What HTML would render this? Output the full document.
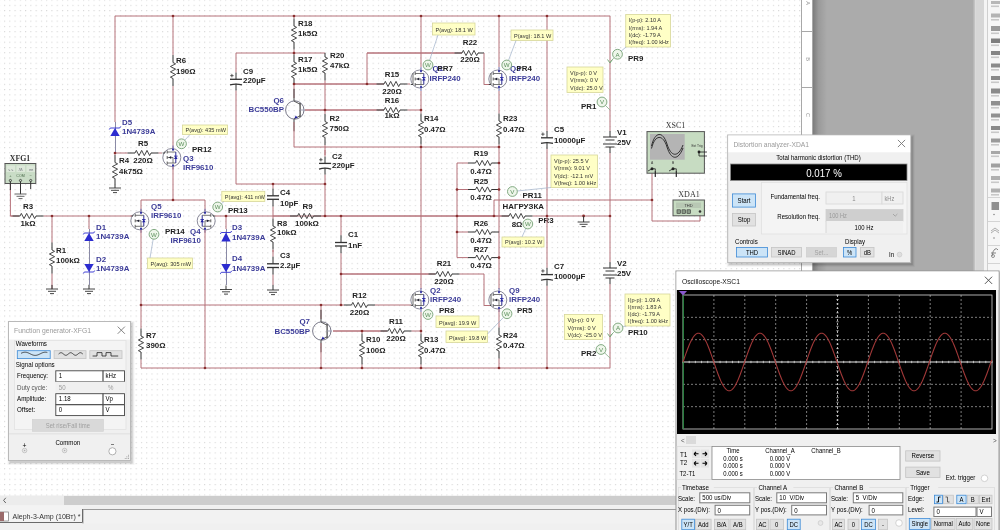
<!DOCTYPE html><html><head><meta charset="utf-8"><style>
*{margin:0;padding:0;box-sizing:border-box}
html,body{width:1000px;height:530px;overflow:hidden;background:#fff;font-family:"Liberation Sans",sans-serif}
#root{position:relative;width:1000px;height:530px;overflow:hidden;filter:blur(0.3px)}
svg{position:absolute;left:0;top:0}
.dlg{position:absolute;background:#f0f0f0;border:1px solid #a8a8a8;box-shadow:1px 1px 3px rgba(0,0,0,.35)}
.abs{position:absolute}
</style></head><body><div id="root"><svg width="1000" height="530" viewBox="0 0 1000 530"><defs><pattern id="dots" x="4.0" y="-0.45" width="5.266" height="5.266" patternUnits="userSpaceOnUse"><rect x="0" y="0" width="1.1" height="1.1" fill="#d6d6d6"/></pattern></defs><rect x="0" y="0" width="802" height="496" fill="url(#dots)"/><polyline points="115,16 610,16" fill="none" stroke="#b6727a" stroke-width="1"/><polyline points="115,16 115,122" fill="none" stroke="#b6727a" stroke-width="1"/><line x1="115.5" y1="122" x2="115.5" y2="153" stroke="#8a8aa6" stroke-width="1"/><polygon points="110.3,136 119.7,136 115,128" fill="#2c2cd0"/><path d="M109.3,129.5 L110.3,128 H119.7 L120.7,126.5" fill="none" stroke="#2c2cd0" stroke-width="0.9"/><text x="122" y="124.5" font-family="Liberation Sans" font-size="7.9" font-weight="bold" fill="#3b3b98" text-anchor="start" >D5</text><text x="122" y="134" font-family="Liberation Sans" font-size="7.9" font-weight="bold" fill="#3b3b98" text-anchor="start" >1N4739A</text><polyline points="115,153 115,155.0" fill="none" stroke="#b6727a" stroke-width="1"/><polyline points="115,184 115,184" fill="none" stroke="#b6727a" stroke-width="1"/><line x1="115" y1="155.0" x2="115" y2="162.5" stroke="#333" stroke-width="1"/><line x1="115" y1="178.5" x2="115" y2="184" stroke="#333" stroke-width="1"/><polyline points="115.00,162.50 117.60,163.83 112.40,166.50 117.60,169.17 112.40,171.83 117.60,174.50 112.40,177.17 115.00,178.50" fill="none" stroke="#333" stroke-width="0.9"/><text x="119" y="163.2" font-family="Liberation Sans" font-size="7.9" font-weight="bold" fill="#222" text-anchor="start" >R4</text><text x="119" y="173.6" font-family="Liberation Sans" font-size="7.9" font-weight="bold" fill="#222" text-anchor="start" >4k75Ω</text><line x1="115" y1="184" x2="115" y2="188" stroke="#333" stroke-width="1"/><path d="M109,188 h12 M111,190.3 h8 M113,192.6 h4" stroke="#333" stroke-width="0.9"/><polyline points="115,153 127.5,153" fill="none" stroke="#b6727a" stroke-width="1"/><polyline points="158.5,153 162,153" fill="none" stroke="#b6727a" stroke-width="1"/><line x1="127.5" y1="153" x2="135" y2="153" stroke="#333" stroke-width="1"/><line x1="151" y1="153" x2="158.5" y2="153" stroke="#333" stroke-width="1"/><polyline points="135.00,153.00 136.33,150.40 139.00,155.60 141.67,150.40 144.33,155.60 147.00,150.40 149.67,155.60 151.00,153.00" fill="none" stroke="#333" stroke-width="0.9"/><text x="143" y="146.2" font-family="Liberation Sans" font-size="7.9" font-weight="bold" fill="#222" text-anchor="middle" >R5</text><text x="143" y="163.2" font-family="Liberation Sans" font-size="7.9" font-weight="bold" fill="#222" text-anchor="middle" >220Ω</text><polyline points="173,16 173,55.0" fill="none" stroke="#b6727a" stroke-width="1"/><polyline points="173,86.0 173,148" fill="none" stroke="#b6727a" stroke-width="1"/><line x1="173" y1="55.0" x2="173" y2="62.5" stroke="#333" stroke-width="1"/><line x1="173" y1="78.5" x2="173" y2="86.0" stroke="#333" stroke-width="1"/><polyline points="173.00,62.50 175.60,63.83 170.40,66.50 175.60,69.17 170.40,71.83 175.60,74.50 170.40,77.17 173.00,78.50" fill="none" stroke="#333" stroke-width="0.9"/><text x="176" y="63" font-family="Liberation Sans" font-size="7.9" font-weight="bold" fill="#222" text-anchor="start" >R6</text><text x="176" y="74" font-family="Liberation Sans" font-size="7.9" font-weight="bold" fill="#222" text-anchor="start" >190Ω</text><circle cx="171.8" cy="157.5" r="9" fill="none" stroke="#6c6c80" stroke-width="0.8"/><line x1="173" y1="145.5" x2="173" y2="151.0" stroke="#7070b0" stroke-width="1"/><line x1="173" y1="164.0" x2="173" y2="169.5" stroke="#7070b0" stroke-width="1"/><line x1="162.8" y1="153" x2="165" y2="153" stroke="#333" stroke-width="0.9"/><line x1="165" y1="151.5" x2="165" y2="153" stroke="#555" stroke-width="0.9"/><line x1="167.2" y1="150.5" x2="167.2" y2="153.5" stroke="#555" stroke-width="0.9"/><line x1="167.2" y1="156.0" x2="167.2" y2="159.0" stroke="#555" stroke-width="0.9"/><line x1="167.2" y1="161.5" x2="167.2" y2="164.5" stroke="#555" stroke-width="0.9"/><line x1="167.2" y1="152.0" x2="173" y2="152.0" stroke="#555" stroke-width="0.8"/><line x1="167.2" y1="157.5" x2="173" y2="157.5" stroke="#555" stroke-width="0.8"/><line x1="167.2" y1="163.0" x2="173" y2="163.0" stroke="#555" stroke-width="0.8"/><line x1="173" y1="157.5" x2="173" y2="163.0" stroke="#555" stroke-width="0.8"/><polygon points="168.7,157.5 171.2,156.1 171.2,158.9" fill="#223"/><line x1="173" y1="152.0" x2="175.8" y2="152.0" stroke="#555" stroke-width="0.8"/><line x1="173" y1="163.0" x2="175.8" y2="163.0" stroke="#555" stroke-width="0.8"/><line x1="175.8" y1="152.0" x2="175.8" y2="163.0" stroke="#2a2a90" stroke-width="1"/><polygon points="174.0,159.0 177.60000000000002,159.0 175.8,156.3" fill="#2020a0"/><rect x="174.0" y="155.7" width="3.6" height="0.8" fill="#2020a0"/><circle cx="173" cy="149.5" r="1" fill="#2828a0"/><circle cx="173" cy="165.5" r="1" fill="#2828a0"/><polyline points="173,167 173,200" fill="none" stroke="#b6727a" stroke-width="1"/><text x="183" y="160.8" font-family="Liberation Sans" font-size="7.9" font-weight="bold" fill="#3b3b98" text-anchor="start" >Q3</text><text x="183" y="169.8" font-family="Liberation Sans" font-size="7.9" font-weight="bold" fill="#3b3b98" text-anchor="start" >IRF9610</text><text x="192" y="152" font-family="Liberation Sans" font-size="7.9" font-weight="bold" fill="#222" text-anchor="start" >PR12</text><polyline points="141,200 205,200" fill="none" stroke="#b6727a" stroke-width="1"/><polyline points="141,200 141,211" fill="none" stroke="#b6727a" stroke-width="1"/><polyline points="205,200 205,211" fill="none" stroke="#b6727a" stroke-width="1"/><circle cx="139.8" cy="220.8" r="9" fill="none" stroke="#6c6c80" stroke-width="0.8"/><line x1="141" y1="208.8" x2="141" y2="214.3" stroke="#7070b0" stroke-width="1"/><line x1="141" y1="227.3" x2="141" y2="232.8" stroke="#7070b0" stroke-width="1"/><line x1="130.8" y1="216" x2="133" y2="216" stroke="#333" stroke-width="0.9"/><line x1="133" y1="214.8" x2="133" y2="216" stroke="#555" stroke-width="0.9"/><line x1="135.2" y1="213.8" x2="135.2" y2="216.8" stroke="#555" stroke-width="0.9"/><line x1="135.2" y1="219.3" x2="135.2" y2="222.3" stroke="#555" stroke-width="0.9"/><line x1="135.2" y1="224.8" x2="135.2" y2="227.8" stroke="#555" stroke-width="0.9"/><line x1="135.2" y1="215.3" x2="141" y2="215.3" stroke="#555" stroke-width="0.8"/><line x1="135.2" y1="220.8" x2="141" y2="220.8" stroke="#555" stroke-width="0.8"/><line x1="135.2" y1="226.3" x2="141" y2="226.3" stroke="#555" stroke-width="0.8"/><line x1="141" y1="220.8" x2="141" y2="226.3" stroke="#555" stroke-width="0.8"/><polygon points="136.7,220.8 139.2,219.4 139.2,222.20000000000002" fill="#223"/><line x1="141" y1="215.3" x2="143.8" y2="215.3" stroke="#555" stroke-width="0.8"/><line x1="141" y1="226.3" x2="143.8" y2="226.3" stroke="#555" stroke-width="0.8"/><line x1="143.8" y1="215.3" x2="143.8" y2="226.3" stroke="#2a2a90" stroke-width="1"/><polygon points="142.0,222.3 145.60000000000002,222.3 143.8,219.60000000000002" fill="#2020a0"/><rect x="142.0" y="219.0" width="3.6" height="0.8" fill="#2020a0"/><circle cx="141" cy="212.8" r="1" fill="#2828a0"/><circle cx="141" cy="228.8" r="1" fill="#2828a0"/><circle cx="206.2" cy="220.8" r="9" fill="none" stroke="#6c6c80" stroke-width="0.8"/><line x1="205" y1="208.8" x2="205" y2="214.3" stroke="#7070b0" stroke-width="1"/><line x1="205" y1="227.3" x2="205" y2="232.8" stroke="#7070b0" stroke-width="1"/><line x1="215.2" y1="216" x2="213" y2="216" stroke="#333" stroke-width="0.9"/><line x1="213" y1="214.8" x2="213" y2="216" stroke="#555" stroke-width="0.9"/><line x1="210.8" y1="213.8" x2="210.8" y2="216.8" stroke="#555" stroke-width="0.9"/><line x1="210.8" y1="219.3" x2="210.8" y2="222.3" stroke="#555" stroke-width="0.9"/><line x1="210.8" y1="224.8" x2="210.8" y2="227.8" stroke="#555" stroke-width="0.9"/><line x1="210.8" y1="215.3" x2="205" y2="215.3" stroke="#555" stroke-width="0.8"/><line x1="210.8" y1="220.8" x2="205" y2="220.8" stroke="#555" stroke-width="0.8"/><line x1="210.8" y1="226.3" x2="205" y2="226.3" stroke="#555" stroke-width="0.8"/><line x1="205" y1="220.8" x2="205" y2="226.3" stroke="#555" stroke-width="0.8"/><polygon points="209.3,220.8 206.8,219.4 206.8,222.20000000000002" fill="#223"/><line x1="205" y1="215.3" x2="202.2" y2="215.3" stroke="#555" stroke-width="0.8"/><line x1="205" y1="226.3" x2="202.2" y2="226.3" stroke="#555" stroke-width="0.8"/><line x1="202.2" y1="215.3" x2="202.2" y2="226.3" stroke="#2a2a90" stroke-width="1"/><polygon points="200.39999999999998,222.3 204.0,222.3 202.2,219.60000000000002" fill="#2020a0"/><rect x="200.39999999999998" y="219.0" width="3.6" height="0.8" fill="#2020a0"/><circle cx="205" cy="212.8" r="1" fill="#2828a0"/><circle cx="205" cy="228.8" r="1" fill="#2828a0"/><text x="151" y="208.5" font-family="Liberation Sans" font-size="7.9" font-weight="bold" fill="#3b3b98" text-anchor="start" >Q5</text><text x="151" y="217.5" font-family="Liberation Sans" font-size="7.9" font-weight="bold" fill="#3b3b98" text-anchor="start" >IRF9610</text><text x="165" y="233.5" font-family="Liberation Sans" font-size="7.9" font-weight="bold" fill="#222" text-anchor="start" >PR14</text><text x="190" y="233.5" font-family="Liberation Sans" font-size="7.9" font-weight="bold" fill="#3b3b98" text-anchor="start" >Q4</text><text x="170.5" y="243" font-family="Liberation Sans" font-size="7.9" font-weight="bold" fill="#3b3b98" text-anchor="start" >IRF9610</text><text x="228" y="213" font-family="Liberation Sans" font-size="7.9" font-weight="bold" fill="#222" text-anchor="start" >PR13</text><polyline points="141,230 141,305" fill="none" stroke="#b6727a" stroke-width="1"/><polyline points="141,305 141,328.5" fill="none" stroke="#b6727a" stroke-width="1"/><polyline points="141,359.5 141,368" fill="none" stroke="#b6727a" stroke-width="1"/><line x1="141" y1="328.5" x2="141" y2="336" stroke="#333" stroke-width="1"/><line x1="141" y1="352" x2="141" y2="359.5" stroke="#333" stroke-width="1"/><polyline points="141.00,336.00 143.60,337.33 138.40,340.00 143.60,342.67 138.40,345.33 143.60,348.00 138.40,350.67 141.00,352.00" fill="none" stroke="#333" stroke-width="0.9"/><text x="146" y="337.5" font-family="Liberation Sans" font-size="7.9" font-weight="bold" fill="#222" text-anchor="start" >R7</text><text x="146" y="347.5" font-family="Liberation Sans" font-size="7.9" font-weight="bold" fill="#222" text-anchor="start" >390Ω</text><polyline points="205,230 205,368" fill="none" stroke="#b6727a" stroke-width="1"/><polyline points="10.4,183 10.4,216 19,216" fill="none" stroke="#b6727a" stroke-width="1"/><polyline points="10.4,216 12.5,216" fill="none" stroke="#b6727a" stroke-width="1"/><polyline points="43.5,216 132,216" fill="none" stroke="#b6727a" stroke-width="1"/><line x1="12.5" y1="216" x2="20" y2="216" stroke="#333" stroke-width="1"/><line x1="36" y1="216" x2="43.5" y2="216" stroke="#333" stroke-width="1"/><polyline points="20.00,216.00 21.33,213.40 24.00,218.60 26.67,213.40 29.33,218.60 32.00,213.40 34.67,218.60 36.00,216.00" fill="none" stroke="#333" stroke-width="0.9"/><text x="28" y="209.4" font-family="Liberation Sans" font-size="7.9" font-weight="bold" fill="#222" text-anchor="middle" >R3</text><text x="28" y="226.4" font-family="Liberation Sans" font-size="7.9" font-weight="bold" fill="#222" text-anchor="middle" >1kΩ</text><polyline points="52,216 52,242.5" fill="none" stroke="#b6727a" stroke-width="1"/><polyline points="52,273.5 52,289" fill="none" stroke="#b6727a" stroke-width="1"/><line x1="52" y1="242.5" x2="52" y2="250" stroke="#333" stroke-width="1"/><line x1="52" y1="266" x2="52" y2="273.5" stroke="#333" stroke-width="1"/><polyline points="52.00,250.00 54.60,251.33 49.40,254.00 54.60,256.67 49.40,259.33 54.60,262.00 49.40,264.67 52.00,266.00" fill="none" stroke="#333" stroke-width="0.9"/><text x="56" y="252.8" font-family="Liberation Sans" font-size="7.9" font-weight="bold" fill="#222" text-anchor="start" >R1</text><text x="56" y="263.2" font-family="Liberation Sans" font-size="7.9" font-weight="bold" fill="#222" text-anchor="start" >100kΩ</text><line x1="52" y1="285" x2="52" y2="289" stroke="#333" stroke-width="1"/><path d="M46,289 h12 M48,291.3 h8 M50,293.6 h4" stroke="#333" stroke-width="0.9"/><polyline points="89,216 89,229" fill="none" stroke="#b6727a" stroke-width="1"/><line x1="89.5" y1="229" x2="89.5" y2="285" stroke="#8a8aa6" stroke-width="1"/><polygon points="84.3,241 93.7,241 89,233" fill="#2c2cd0"/><path d="M83.3,234.5 L84.3,233 H93.7 L94.7,231.5" fill="none" stroke="#2c2cd0" stroke-width="0.9"/><polygon points="84.3,264 93.7,264 89,272" fill="#2c2cd0"/><path d="M83.3,273.5 L84.3,272 H93.7 L94.7,270.5" fill="none" stroke="#2c2cd0" stroke-width="0.9"/><text x="96" y="229.6" font-family="Liberation Sans" font-size="7.9" font-weight="bold" fill="#3b3b98" text-anchor="start" >D1</text><text x="96" y="239" font-family="Liberation Sans" font-size="7.9" font-weight="bold" fill="#3b3b98" text-anchor="start" >1N4739A</text><text x="96" y="261.5" font-family="Liberation Sans" font-size="7.9" font-weight="bold" fill="#3b3b98" text-anchor="start" >D2</text><text x="96" y="271" font-family="Liberation Sans" font-size="7.9" font-weight="bold" fill="#3b3b98" text-anchor="start" >1N4739A</text><line x1="89" y1="285" x2="89" y2="289" stroke="#333" stroke-width="1"/><path d="M83,289 h12 M85,291.3 h8 M87,293.6 h4" stroke="#333" stroke-width="0.9"/><polyline points="215,216 273,216" fill="none" stroke="#b6727a" stroke-width="1"/><polyline points="226,216 226,229" fill="none" stroke="#b6727a" stroke-width="1"/><line x1="226.5" y1="229" x2="226.5" y2="285" stroke="#8a8aa6" stroke-width="1"/><polygon points="221.3,241.5 230.7,241.5 226,232.5" fill="#2c2cd0"/><path d="M220.3,234.0 L221.3,232.5 H230.7 L231.7,231.0" fill="none" stroke="#2c2cd0" stroke-width="0.9"/><polygon points="221.3,264 230.7,264 226,272.3" fill="#2c2cd0"/><path d="M220.3,273.8 L221.3,272.3 H230.7 L231.7,270.8" fill="none" stroke="#2c2cd0" stroke-width="0.9"/><text x="232" y="230" font-family="Liberation Sans" font-size="7.9" font-weight="bold" fill="#3b3b98" text-anchor="start" >D3</text><text x="232" y="239.5" font-family="Liberation Sans" font-size="7.9" font-weight="bold" fill="#3b3b98" text-anchor="start" >1N4739A</text><text x="232" y="261" font-family="Liberation Sans" font-size="7.9" font-weight="bold" fill="#3b3b98" text-anchor="start" >D4</text><text x="232" y="271" font-family="Liberation Sans" font-size="7.9" font-weight="bold" fill="#3b3b98" text-anchor="start" >1N4739A</text><line x1="226" y1="285.5" x2="226" y2="289.5" stroke="#333" stroke-width="1"/><path d="M220,289.5 h12 M222,291.8 h8 M224,294.1 h4" stroke="#333" stroke-width="0.9"/><polyline points="236,53 325,53" fill="none" stroke="#b6727a" stroke-width="1"/><polyline points="236,53 236,72.5" fill="none" stroke="#b6727a" stroke-width="1"/><polyline points="236,90.5 236,184" fill="none" stroke="#b6727a" stroke-width="1"/><line x1="236" y1="72.5" x2="236" y2="79.25" stroke="#333" stroke-width="1"/><line x1="236" y1="83.75" x2="236" y2="90.5" stroke="#333" stroke-width="1"/><rect x="230" y="78.65" width="12" height="1.3" fill="#333"/><path d="M230,84.95 Q236,83.15 242,84.95" fill="none" stroke="#333" stroke-width="1.3"/><path d="M230.2,75.65 h3.4 M231.9,73.95 v3.4" stroke="#333" stroke-width="0.8"/><text x="243" y="74.3" font-family="Liberation Sans" font-size="7.9" font-weight="bold" fill="#222" text-anchor="start" >C9</text><text x="243" y="83.3" font-family="Liberation Sans" font-size="7.9" font-weight="bold" fill="#222" text-anchor="start" >220µF</text><polyline points="236,184 325,184" fill="none" stroke="#b6727a" stroke-width="1"/><polyline points="294,16 294,18.5" fill="none" stroke="#b6727a" stroke-width="1"/><polyline points="294,49.5 294,53" fill="none" stroke="#b6727a" stroke-width="1"/><line x1="294" y1="18.5" x2="294" y2="26" stroke="#333" stroke-width="1"/><line x1="294" y1="42" x2="294" y2="49.5" stroke="#333" stroke-width="1"/><polyline points="294.00,26.00 296.60,27.33 291.40,30.00 296.60,32.67 291.40,35.33 296.60,38.00 291.40,40.67 294.00,42.00" fill="none" stroke="#333" stroke-width="0.9"/><text x="298" y="26" font-family="Liberation Sans" font-size="7.9" font-weight="bold" fill="#222" text-anchor="start" >R18</text><text x="298" y="35.7" font-family="Liberation Sans" font-size="7.9" font-weight="bold" fill="#222" text-anchor="start" >1k5Ω</text><polyline points="294,53 294,54.5" fill="none" stroke="#b6727a" stroke-width="1"/><polyline points="294,84 294,84" fill="none" stroke="#b6727a" stroke-width="1"/><line x1="294" y1="54.5" x2="294" y2="62" stroke="#333" stroke-width="1"/><line x1="294" y1="78" x2="294" y2="84" stroke="#333" stroke-width="1"/><polyline points="294.00,62.00 296.60,63.33 291.40,66.00 296.60,68.67 291.40,71.33 296.60,74.00 291.40,76.67 294.00,78.00" fill="none" stroke="#333" stroke-width="0.9"/><text x="298" y="62.3" font-family="Liberation Sans" font-size="7.9" font-weight="bold" fill="#222" text-anchor="start" >R17</text><text x="298" y="71.6" font-family="Liberation Sans" font-size="7.9" font-weight="bold" fill="#222" text-anchor="start" >1k5Ω</text><polyline points="294,84 294,98" fill="none" stroke="#b6727a" stroke-width="1"/><circle cx="294.8" cy="110" r="9.2" fill="none" stroke="#55556a" stroke-width="0.8"/><line x1="300.1" y1="103" x2="300.1" y2="117" stroke="#333" stroke-width="1.1"/><line x1="300.1" y1="110" x2="305.0" y2="110" stroke="#9a9ab0" stroke-width="0.9"/><line x1="294" y1="101.1" x2="300.1" y2="104.2" stroke="#444" stroke-width="0.9"/><line x1="300.1" y1="115.8" x2="294" y2="118.9" stroke="#444" stroke-width="0.9"/><line x1="294" y1="100.8" x2="294" y2="88.8" stroke="#444" stroke-width="1"/><line x1="294" y1="119.2" x2="294" y2="131.2" stroke="#444" stroke-width="1"/><polygon points="294.3,118.6 297.6,117.8 295.8,115.6" fill="#2020a0"/><text x="284" y="102.5" font-family="Liberation Sans" font-size="7.9" font-weight="bold" fill="#3b3b98" text-anchor="end" >Q6</text><text x="284" y="112" font-family="Liberation Sans" font-size="7.9" font-weight="bold" fill="#3b3b98" text-anchor="end" >BC550BP</text><polyline points="294,122 294,147 499,147" fill="none" stroke="#b6727a" stroke-width="1"/><polyline points="294,84 384,84" fill="none" stroke="#b6727a" stroke-width="1"/><polyline points="294,84 376.5,84" fill="none" stroke="#b6727a" stroke-width="1"/><polyline points="407.5,84 410,84" fill="none" stroke="#b6727a" stroke-width="1"/><line x1="376.5" y1="84" x2="384" y2="84" stroke="#333" stroke-width="1"/><line x1="400" y1="84" x2="407.5" y2="84" stroke="#333" stroke-width="1"/><polyline points="384.00,84.00 385.33,81.40 388.00,86.60 390.67,81.40 393.33,86.60 396.00,81.40 398.67,86.60 400.00,84.00" fill="none" stroke="#333" stroke-width="0.9"/><text x="392" y="76.5" font-family="Liberation Sans" font-size="7.9" font-weight="bold" fill="#222" text-anchor="middle" >R15</text><text x="392" y="94" font-family="Liberation Sans" font-size="7.9" font-weight="bold" fill="#222" text-anchor="middle" >220Ω</text><polyline points="367,53 367,84" fill="none" stroke="#b6727a" stroke-width="1"/><polyline points="325,53 325,53" fill="none" stroke="#b6727a" stroke-width="1"/><polyline points="325,80.5 325,110" fill="none" stroke="#b6727a" stroke-width="1"/><line x1="325" y1="53" x2="325" y2="57" stroke="#333" stroke-width="1"/><line x1="325" y1="73" x2="325" y2="80.5" stroke="#333" stroke-width="1"/><polyline points="325.00,57.00 327.60,58.33 322.40,61.00 327.60,63.67 322.40,66.33 327.60,69.00 322.40,71.67 325.00,73.00" fill="none" stroke="#333" stroke-width="0.9"/><text x="330" y="58" font-family="Liberation Sans" font-size="7.9" font-weight="bold" fill="#222" text-anchor="start" >R20</text><text x="330" y="68" font-family="Liberation Sans" font-size="7.9" font-weight="bold" fill="#222" text-anchor="start" >47kΩ</text><polyline points="325,110 325,114.0" fill="none" stroke="#b6727a" stroke-width="1"/><polyline points="325,145.0 325,147" fill="none" stroke="#b6727a" stroke-width="1"/><line x1="325" y1="114.0" x2="325" y2="121.5" stroke="#333" stroke-width="1"/><line x1="325" y1="137.5" x2="325" y2="145.0" stroke="#333" stroke-width="1"/><polyline points="325.00,121.50 327.60,122.83 322.40,125.50 327.60,128.17 322.40,130.83 327.60,133.50 322.40,136.17 325.00,137.50" fill="none" stroke="#333" stroke-width="0.9"/><text x="329.5" y="121.3" font-family="Liberation Sans" font-size="7.9" font-weight="bold" fill="#222" text-anchor="start" >R2</text><text x="329.5" y="131.3" font-family="Liberation Sans" font-size="7.9" font-weight="bold" fill="#222" text-anchor="start" >750Ω</text><polyline points="325,147 325,155" fill="none" stroke="#b6727a" stroke-width="1"/><polyline points="325,150 325,156.6" fill="none" stroke="#b6727a" stroke-width="1"/><polyline points="325,174.6 325,216" fill="none" stroke="#b6727a" stroke-width="1"/><line x1="325" y1="156.6" x2="325" y2="163.35" stroke="#333" stroke-width="1"/><line x1="325" y1="167.85" x2="325" y2="174.6" stroke="#333" stroke-width="1"/><rect x="319" y="162.75" width="12" height="1.3" fill="#333"/><path d="M319,169.04999999999998 Q325,167.25 331,169.04999999999998" fill="none" stroke="#333" stroke-width="1.3"/><path d="M319.2,159.75 h3.4 M320.9,158.04999999999998 v3.4" stroke="#333" stroke-width="0.8"/><text x="332" y="158.8" font-family="Liberation Sans" font-size="7.9" font-weight="bold" fill="#222" text-anchor="start" >C2</text><text x="332" y="168" font-family="Liberation Sans" font-size="7.9" font-weight="bold" fill="#222" text-anchor="start" >220µF</text><polyline points="305,110 384,110" fill="none" stroke="#b6727a" stroke-width="1"/><polyline points="305,110 376.5,110" fill="none" stroke="#b6727a" stroke-width="1"/><polyline points="407.5,110 421,110" fill="none" stroke="#b6727a" stroke-width="1"/><line x1="376.5" y1="110" x2="384" y2="110" stroke="#333" stroke-width="1"/><line x1="400" y1="110" x2="407.5" y2="110" stroke="#333" stroke-width="1"/><polyline points="384.00,110.00 385.33,107.40 388.00,112.60 390.67,107.40 393.33,112.60 396.00,107.40 398.67,112.60 400.00,110.00" fill="none" stroke="#333" stroke-width="0.9"/><text x="392" y="102.5" font-family="Liberation Sans" font-size="7.9" font-weight="bold" fill="#222" text-anchor="middle" >R16</text><text x="392" y="118" font-family="Liberation Sans" font-size="7.9" font-weight="bold" fill="#222" text-anchor="middle" >1kΩ</text><polyline points="421,16 421,67" fill="none" stroke="#b6727a" stroke-width="1"/><circle cx="419.8" cy="79" r="9" fill="none" stroke="#6c6c80" stroke-width="0.8"/><line x1="421" y1="67" x2="421" y2="72.5" stroke="#7070b0" stroke-width="1"/><line x1="421" y1="85.5" x2="421" y2="91" stroke="#7070b0" stroke-width="1"/><line x1="410.8" y1="84.5" x2="413" y2="84.5" stroke="#333" stroke-width="0.9"/><line x1="413" y1="73" x2="413" y2="84.5" stroke="#555" stroke-width="0.9"/><line x1="415.2" y1="72" x2="415.2" y2="75" stroke="#555" stroke-width="0.9"/><line x1="415.2" y1="77.5" x2="415.2" y2="80.5" stroke="#555" stroke-width="0.9"/><line x1="415.2" y1="83" x2="415.2" y2="86" stroke="#555" stroke-width="0.9"/><line x1="415.2" y1="73.5" x2="421" y2="73.5" stroke="#555" stroke-width="0.8"/><line x1="415.2" y1="79" x2="421" y2="79" stroke="#555" stroke-width="0.8"/><line x1="415.2" y1="84.5" x2="421" y2="84.5" stroke="#555" stroke-width="0.8"/><line x1="421" y1="79" x2="421" y2="84.5" stroke="#555" stroke-width="0.8"/><polygon points="416.7,79 419.2,77.6 419.2,80.4" fill="#223"/><line x1="421" y1="73.5" x2="423.8" y2="73.5" stroke="#555" stroke-width="0.8"/><line x1="421" y1="84.5" x2="423.8" y2="84.5" stroke="#555" stroke-width="0.8"/><line x1="423.8" y1="73.5" x2="423.8" y2="84.5" stroke="#2a2a90" stroke-width="1"/><polygon points="422.0,80.5 425.6,80.5 423.8,77.8" fill="#2020a0"/><rect x="422.0" y="77.2" width="3.6" height="0.8" fill="#2020a0"/><circle cx="421" cy="71" r="1" fill="#2828a0"/><circle cx="421" cy="87" r="1" fill="#2828a0"/><polyline points="421,91 421,110" fill="none" stroke="#b6727a" stroke-width="1"/><polyline points="421,110 421,113.5" fill="none" stroke="#b6727a" stroke-width="1"/><polyline points="421,144.5 421,147" fill="none" stroke="#b6727a" stroke-width="1"/><line x1="421" y1="113.5" x2="421" y2="121" stroke="#333" stroke-width="1"/><line x1="421" y1="137" x2="421" y2="144.5" stroke="#333" stroke-width="1"/><polyline points="421.00,121.00 423.60,122.33 418.40,125.00 423.60,127.67 418.40,130.33 423.60,133.00 418.40,135.67 421.00,137.00" fill="none" stroke="#333" stroke-width="0.9"/><text x="424" y="121.4" font-family="Liberation Sans" font-size="7.9" font-weight="bold" fill="#222" text-anchor="start" >R14</text><text x="424" y="132" font-family="Liberation Sans" font-size="7.9" font-weight="bold" fill="#222" text-anchor="start" >0.47Ω</text><polyline points="421,147 421,289" fill="none" stroke="#b6727a" stroke-width="1"/><text x="432.5" y="71.3" font-family="Liberation Sans" font-size="7.9" font-weight="bold" fill="#3b3b98" text-anchor="start" >Q1</text><text x="437.5" y="71.3" font-family="Liberation Sans" font-size="7.9" font-weight="bold" fill="#222" text-anchor="start" >PR7</text><text x="429.5" y="81.3" font-family="Liberation Sans" font-size="7.9" font-weight="bold" fill="#3b3b98" text-anchor="start" >IRFP240</text><circle cx="419.8" cy="300" r="9" fill="none" stroke="#6c6c80" stroke-width="0.8"/><line x1="421" y1="288" x2="421" y2="293.5" stroke="#7070b0" stroke-width="1"/><line x1="421" y1="306.5" x2="421" y2="312" stroke="#7070b0" stroke-width="1"/><line x1="410.8" y1="305.3" x2="413" y2="305.3" stroke="#333" stroke-width="0.9"/><line x1="413" y1="294" x2="413" y2="305.3" stroke="#555" stroke-width="0.9"/><line x1="415.2" y1="293" x2="415.2" y2="296" stroke="#555" stroke-width="0.9"/><line x1="415.2" y1="298.5" x2="415.2" y2="301.5" stroke="#555" stroke-width="0.9"/><line x1="415.2" y1="304" x2="415.2" y2="307" stroke="#555" stroke-width="0.9"/><line x1="415.2" y1="294.5" x2="421" y2="294.5" stroke="#555" stroke-width="0.8"/><line x1="415.2" y1="300" x2="421" y2="300" stroke="#555" stroke-width="0.8"/><line x1="415.2" y1="305.5" x2="421" y2="305.5" stroke="#555" stroke-width="0.8"/><line x1="421" y1="300" x2="421" y2="305.5" stroke="#555" stroke-width="0.8"/><polygon points="416.7,300 419.2,298.6 419.2,301.4" fill="#223"/><line x1="421" y1="294.5" x2="423.8" y2="294.5" stroke="#555" stroke-width="0.8"/><line x1="421" y1="305.5" x2="423.8" y2="305.5" stroke="#555" stroke-width="0.8"/><line x1="423.8" y1="294.5" x2="423.8" y2="305.5" stroke="#2a2a90" stroke-width="1"/><polygon points="422.0,301.5 425.6,301.5 423.8,298.8" fill="#2020a0"/><rect x="422.0" y="298.2" width="3.6" height="0.8" fill="#2020a0"/><circle cx="421" cy="292" r="1" fill="#2828a0"/><circle cx="421" cy="308" r="1" fill="#2828a0"/><polyline points="421,312 421,331" fill="none" stroke="#b6727a" stroke-width="1"/><text x="430" y="292.5" font-family="Liberation Sans" font-size="7.9" font-weight="bold" fill="#3b3b98" text-anchor="start" >Q2</text><text x="430" y="301.8" font-family="Liberation Sans" font-size="7.9" font-weight="bold" fill="#3b3b98" text-anchor="start" >IRFP240</text><text x="439" y="312.5" font-family="Liberation Sans" font-size="7.9" font-weight="bold" fill="#222" text-anchor="start" >PR8</text><polyline points="421,331 421,333.5" fill="none" stroke="#b6727a" stroke-width="1"/><polyline points="421,364.5 421,368" fill="none" stroke="#b6727a" stroke-width="1"/><line x1="421" y1="333.5" x2="421" y2="341" stroke="#333" stroke-width="1"/><line x1="421" y1="357" x2="421" y2="364.5" stroke="#333" stroke-width="1"/><polyline points="421.00,341.00 423.60,342.33 418.40,345.00 423.60,347.67 418.40,350.33 423.60,353.00 418.40,355.67 421.00,357.00" fill="none" stroke="#333" stroke-width="0.9"/><text x="424" y="342" font-family="Liberation Sans" font-size="7.9" font-weight="bold" fill="#222" text-anchor="start" >R13</text><text x="424" y="353" font-family="Liberation Sans" font-size="7.9" font-weight="bold" fill="#222" text-anchor="start" >0.47Ω</text><polyline points="367,53 462,53" fill="none" stroke="#b6727a" stroke-width="1"/><polyline points="367,53 454.5,53" fill="none" stroke="#b6727a" stroke-width="1"/><polyline points="484,53 484,53" fill="none" stroke="#b6727a" stroke-width="1"/><line x1="454.5" y1="53" x2="462" y2="53" stroke="#333" stroke-width="1"/><line x1="478" y1="53" x2="484" y2="53" stroke="#333" stroke-width="1"/><polyline points="462.00,53.00 463.33,50.40 466.00,55.60 468.67,50.40 471.33,55.60 474.00,50.40 476.67,55.60 478.00,53.00" fill="none" stroke="#333" stroke-width="0.9"/><text x="470" y="45" font-family="Liberation Sans" font-size="7.9" font-weight="bold" fill="#222" text-anchor="middle" >R22</text><text x="470" y="62" font-family="Liberation Sans" font-size="7.9" font-weight="bold" fill="#222" text-anchor="middle" >220Ω</text><polyline points="484,53 484,84.5 490,84.5" fill="none" stroke="#b6727a" stroke-width="1"/><polyline points="499,16 499,67" fill="none" stroke="#b6727a" stroke-width="1"/><circle cx="497.8" cy="79" r="9" fill="none" stroke="#6c6c80" stroke-width="0.8"/><line x1="499" y1="67" x2="499" y2="72.5" stroke="#7070b0" stroke-width="1"/><line x1="499" y1="85.5" x2="499" y2="91" stroke="#7070b0" stroke-width="1"/><line x1="488.8" y1="84.5" x2="491" y2="84.5" stroke="#333" stroke-width="0.9"/><line x1="491" y1="73" x2="491" y2="84.5" stroke="#555" stroke-width="0.9"/><line x1="493.2" y1="72" x2="493.2" y2="75" stroke="#555" stroke-width="0.9"/><line x1="493.2" y1="77.5" x2="493.2" y2="80.5" stroke="#555" stroke-width="0.9"/><line x1="493.2" y1="83" x2="493.2" y2="86" stroke="#555" stroke-width="0.9"/><line x1="493.2" y1="73.5" x2="499" y2="73.5" stroke="#555" stroke-width="0.8"/><line x1="493.2" y1="79" x2="499" y2="79" stroke="#555" stroke-width="0.8"/><line x1="493.2" y1="84.5" x2="499" y2="84.5" stroke="#555" stroke-width="0.8"/><line x1="499" y1="79" x2="499" y2="84.5" stroke="#555" stroke-width="0.8"/><polygon points="494.7,79 497.2,77.6 497.2,80.4" fill="#223"/><line x1="499" y1="73.5" x2="501.8" y2="73.5" stroke="#555" stroke-width="0.8"/><line x1="499" y1="84.5" x2="501.8" y2="84.5" stroke="#555" stroke-width="0.8"/><line x1="501.8" y1="73.5" x2="501.8" y2="84.5" stroke="#2a2a90" stroke-width="1"/><polygon points="500.0,80.5 503.6,80.5 501.8,77.8" fill="#2020a0"/><rect x="500.0" y="77.2" width="3.6" height="0.8" fill="#2020a0"/><circle cx="499" cy="71" r="1" fill="#2828a0"/><circle cx="499" cy="87" r="1" fill="#2828a0"/><polyline points="499,91 499,110" fill="none" stroke="#b6727a" stroke-width="1"/><polyline points="499,110 499,113.5" fill="none" stroke="#b6727a" stroke-width="1"/><polyline points="499,144.5 499,147" fill="none" stroke="#b6727a" stroke-width="1"/><line x1="499" y1="113.5" x2="499" y2="121" stroke="#333" stroke-width="1"/><line x1="499" y1="137" x2="499" y2="144.5" stroke="#333" stroke-width="1"/><polyline points="499.00,121.00 501.60,122.33 496.40,125.00 501.60,127.67 496.40,130.33 501.60,133.00 496.40,135.67 499.00,137.00" fill="none" stroke="#333" stroke-width="0.9"/><text x="503" y="121.4" font-family="Liberation Sans" font-size="7.9" font-weight="bold" fill="#222" text-anchor="start" >R23</text><text x="503" y="132" font-family="Liberation Sans" font-size="7.9" font-weight="bold" fill="#222" text-anchor="start" >0.47Ω</text><polyline points="499,147 499,289" fill="none" stroke="#b6727a" stroke-width="1"/><text x="510" y="71.3" font-family="Liberation Sans" font-size="7.9" font-weight="bold" fill="#3b3b98" text-anchor="start" >Q8</text><text x="516.5" y="71.3" font-family="Liberation Sans" font-size="7.9" font-weight="bold" fill="#222" text-anchor="start" >PR4</text><text x="509" y="81.3" font-family="Liberation Sans" font-size="7.9" font-weight="bold" fill="#3b3b98" text-anchor="start" >IRFP240</text><circle cx="497.8" cy="300" r="9" fill="none" stroke="#6c6c80" stroke-width="0.8"/><line x1="499" y1="288" x2="499" y2="293.5" stroke="#7070b0" stroke-width="1"/><line x1="499" y1="306.5" x2="499" y2="312" stroke="#7070b0" stroke-width="1"/><line x1="488.8" y1="305.5" x2="491" y2="305.5" stroke="#333" stroke-width="0.9"/><line x1="491" y1="294" x2="491" y2="305.5" stroke="#555" stroke-width="0.9"/><line x1="493.2" y1="293" x2="493.2" y2="296" stroke="#555" stroke-width="0.9"/><line x1="493.2" y1="298.5" x2="493.2" y2="301.5" stroke="#555" stroke-width="0.9"/><line x1="493.2" y1="304" x2="493.2" y2="307" stroke="#555" stroke-width="0.9"/><line x1="493.2" y1="294.5" x2="499" y2="294.5" stroke="#555" stroke-width="0.8"/><line x1="493.2" y1="300" x2="499" y2="300" stroke="#555" stroke-width="0.8"/><line x1="493.2" y1="305.5" x2="499" y2="305.5" stroke="#555" stroke-width="0.8"/><line x1="499" y1="300" x2="499" y2="305.5" stroke="#555" stroke-width="0.8"/><polygon points="494.7,300 497.2,298.6 497.2,301.4" fill="#223"/><line x1="499" y1="294.5" x2="501.8" y2="294.5" stroke="#555" stroke-width="0.8"/><line x1="499" y1="305.5" x2="501.8" y2="305.5" stroke="#555" stroke-width="0.8"/><line x1="501.8" y1="294.5" x2="501.8" y2="305.5" stroke="#2a2a90" stroke-width="1"/><polygon points="500.0,301.5 503.6,301.5 501.8,298.8" fill="#2020a0"/><rect x="500.0" y="298.2" width="3.6" height="0.8" fill="#2020a0"/><circle cx="499" cy="292" r="1" fill="#2828a0"/><circle cx="499" cy="308" r="1" fill="#2828a0"/><text x="509" y="292.5" font-family="Liberation Sans" font-size="7.9" font-weight="bold" fill="#3b3b98" text-anchor="start" >Q9</text><text x="509" y="302" font-family="Liberation Sans" font-size="7.9" font-weight="bold" fill="#3b3b98" text-anchor="start" >IRFP240</text><text x="517" y="312.5" font-family="Liberation Sans" font-size="7.9" font-weight="bold" fill="#222" text-anchor="start" >PR5</text><polyline points="499,309 499,327.5" fill="none" stroke="#b6727a" stroke-width="1"/><polyline points="499,358.5 499,368" fill="none" stroke="#b6727a" stroke-width="1"/><line x1="499" y1="327.5" x2="499" y2="335" stroke="#333" stroke-width="1"/><line x1="499" y1="351" x2="499" y2="358.5" stroke="#333" stroke-width="1"/><polyline points="499.00,335.00 501.60,336.33 496.40,339.00 501.60,341.67 496.40,344.33 501.60,347.00 496.40,349.67 499.00,351.00" fill="none" stroke="#333" stroke-width="0.9"/><text x="503" y="337.5" font-family="Liberation Sans" font-size="7.9" font-weight="bold" fill="#222" text-anchor="start" >R24</text><text x="503" y="347.5" font-family="Liberation Sans" font-size="7.9" font-weight="bold" fill="#222" text-anchor="start" >0.47Ω</text><polyline points="457,163 457,257.6" fill="none" stroke="#b6727a" stroke-width="1"/><polyline points="457,163 468.0,163" fill="none" stroke="#b6727a" stroke-width="1"/><polyline points="499,163 499,163" fill="none" stroke="#b6727a" stroke-width="1"/><line x1="468.0" y1="163" x2="475.5" y2="163" stroke="#333" stroke-width="1"/><line x1="491.5" y1="163" x2="499" y2="163" stroke="#333" stroke-width="1"/><polyline points="475.50,163.00 476.83,160.40 479.50,165.60 482.17,160.40 484.83,165.60 487.50,160.40 490.17,165.60 491.50,163.00" fill="none" stroke="#333" stroke-width="0.9"/><text x="481" y="156.4" font-family="Liberation Sans" font-size="7.9" font-weight="bold" fill="#222" text-anchor="middle" >R19</text><text x="481" y="173.8" font-family="Liberation Sans" font-size="7.9" font-weight="bold" fill="#222" text-anchor="middle" >0.47Ω</text><polyline points="457,189.5 468.0,189.5" fill="none" stroke="#b6727a" stroke-width="1"/><polyline points="499,189.5 499,189.5" fill="none" stroke="#b6727a" stroke-width="1"/><line x1="468.0" y1="189.5" x2="475.5" y2="189.5" stroke="#333" stroke-width="1"/><line x1="491.5" y1="189.5" x2="499" y2="189.5" stroke="#333" stroke-width="1"/><polyline points="475.50,189.50 476.83,186.90 479.50,192.10 482.17,186.90 484.83,192.10 487.50,186.90 490.17,192.10 491.50,189.50" fill="none" stroke="#333" stroke-width="0.9"/><text x="481" y="183.6" font-family="Liberation Sans" font-size="7.9" font-weight="bold" fill="#222" text-anchor="middle" >R25</text><text x="481" y="200.2" font-family="Liberation Sans" font-size="7.9" font-weight="bold" fill="#222" text-anchor="middle" >0.47Ω</text><polyline points="457,232 468.0,232" fill="none" stroke="#b6727a" stroke-width="1"/><polyline points="499,232 499,232" fill="none" stroke="#b6727a" stroke-width="1"/><line x1="468.0" y1="232" x2="475.5" y2="232" stroke="#333" stroke-width="1"/><line x1="491.5" y1="232" x2="499" y2="232" stroke="#333" stroke-width="1"/><polyline points="475.50,232.00 476.83,229.40 479.50,234.60 482.17,229.40 484.83,234.60 487.50,229.40 490.17,234.60 491.50,232.00" fill="none" stroke="#333" stroke-width="0.9"/><text x="481" y="225.9" font-family="Liberation Sans" font-size="7.9" font-weight="bold" fill="#222" text-anchor="middle" >R26</text><text x="481" y="243" font-family="Liberation Sans" font-size="7.9" font-weight="bold" fill="#222" text-anchor="middle" >0.47Ω</text><polyline points="457,257.6 468.0,257.6" fill="none" stroke="#b6727a" stroke-width="1"/><polyline points="499,257.6 499,257.6" fill="none" stroke="#b6727a" stroke-width="1"/><line x1="468.0" y1="257.6" x2="475.5" y2="257.6" stroke="#333" stroke-width="1"/><line x1="491.5" y1="257.6" x2="499" y2="257.6" stroke="#333" stroke-width="1"/><polyline points="475.50,257.60 476.83,255.00 479.50,260.20 482.17,255.00 484.83,260.20 487.50,255.00 490.17,260.20 491.50,257.60" fill="none" stroke="#333" stroke-width="0.9"/><text x="481" y="251.8" font-family="Liberation Sans" font-size="7.9" font-weight="bold" fill="#222" text-anchor="middle" >R27</text><text x="481" y="268.1" font-family="Liberation Sans" font-size="7.9" font-weight="bold" fill="#222" text-anchor="middle" >0.47Ω</text><polyline points="273,216 509,216" fill="none" stroke="#b6727a" stroke-width="1"/><polyline points="273,216 290.0,216" fill="none" stroke="#b6727a" stroke-width="1"/><polyline points="321.0,216 494,216" fill="none" stroke="#b6727a" stroke-width="1"/><line x1="290.0" y1="216" x2="297.5" y2="216" stroke="#333" stroke-width="1"/><line x1="313.5" y1="216" x2="321.0" y2="216" stroke="#333" stroke-width="1"/><polyline points="297.50,216.00 298.83,213.40 301.50,218.60 304.17,213.40 306.83,218.60 309.50,213.40 312.17,218.60 313.50,216.00" fill="none" stroke="#333" stroke-width="0.9"/><text x="307.5" y="208.8" font-family="Liberation Sans" font-size="7.9" font-weight="bold" fill="#222" text-anchor="middle" >R9</text><text x="307" y="225.5" font-family="Liberation Sans" font-size="7.9" font-weight="bold" fill="#222" text-anchor="middle" >100kΩ</text><polyline points="457,216 501.5,216" fill="none" stroke="#b6727a" stroke-width="1"/><polyline points="532.5,216 610,216" fill="none" stroke="#b6727a" stroke-width="1"/><line x1="501.5" y1="216" x2="509" y2="216" stroke="#333" stroke-width="1"/><line x1="525" y1="216" x2="532.5" y2="216" stroke="#333" stroke-width="1"/><polyline points="509.00,216.00 510.33,213.40 513.00,218.60 515.67,213.40 518.33,218.60 521.00,213.40 523.67,218.60 525.00,216.00" fill="none" stroke="#333" stroke-width="0.9"/><text x="502.6" y="209.2" font-family="Liberation Sans" font-size="7.9" font-weight="bold" fill="#222" text-anchor="start" >НАГРУЗКА</text><text x="517" y="226.7" font-family="Liberation Sans" font-size="7.9" font-weight="bold" fill="#222" text-anchor="middle" >8Ω</text><text x="538.3" y="223.2" font-family="Liberation Sans" font-size="7.9" font-weight="bold" fill="#222" text-anchor="start" >PR3</text><text x="522.5" y="198.1" font-family="Liberation Sans" font-size="7.9" font-weight="bold" fill="#222" text-anchor="start" >PR11</text><polyline points="494,200 494,216" fill="none" stroke="#b6727a" stroke-width="1"/><polyline points="494,200 652,200" fill="none" stroke="#b6727a" stroke-width="1"/><polyline points="273,184 273,188.5" fill="none" stroke="#b6727a" stroke-width="1"/><polyline points="273,206.5 273,216" fill="none" stroke="#b6727a" stroke-width="1"/><line x1="273" y1="188.5" x2="273" y2="195.75" stroke="#333" stroke-width="1"/><line x1="273" y1="199.25" x2="273" y2="206.5" stroke="#333" stroke-width="1"/><rect x="267" y="195.15" width="12" height="1.3" fill="#333"/><rect x="267" y="198.65" width="12" height="1.3" fill="#333"/><text x="280" y="195" font-family="Liberation Sans" font-size="7.9" font-weight="bold" fill="#222" text-anchor="start" >C4</text><text x="280" y="206" font-family="Liberation Sans" font-size="7.9" font-weight="bold" fill="#222" text-anchor="start" >10pF</text><polyline points="273,216 273,218.5" fill="none" stroke="#b6727a" stroke-width="1"/><polyline points="273,249.5 273,252" fill="none" stroke="#b6727a" stroke-width="1"/><line x1="273" y1="218.5" x2="273" y2="226" stroke="#333" stroke-width="1"/><line x1="273" y1="242" x2="273" y2="249.5" stroke="#333" stroke-width="1"/><polyline points="273.00,226.00 275.60,227.33 270.40,230.00 275.60,232.67 270.40,235.33 275.60,238.00 270.40,240.67 273.00,242.00" fill="none" stroke="#333" stroke-width="0.9"/><text x="277" y="226.3" font-family="Liberation Sans" font-size="7.9" font-weight="bold" fill="#222" text-anchor="start" >R8</text><text x="277" y="235" font-family="Liberation Sans" font-size="7.9" font-weight="bold" fill="#222" text-anchor="start" >10kΩ</text><polyline points="273,250 273,256.6" fill="none" stroke="#b6727a" stroke-width="1"/><polyline points="273,274.6 273,285" fill="none" stroke="#b6727a" stroke-width="1"/><line x1="273" y1="256.6" x2="273" y2="263.75" stroke="#333" stroke-width="1"/><line x1="273" y1="267.45000000000005" x2="273" y2="274.6" stroke="#333" stroke-width="1"/><rect x="267" y="263.15" width="12" height="1.3" fill="#333"/><rect x="267" y="266.85" width="12" height="1.3" fill="#333"/><text x="280" y="258" font-family="Liberation Sans" font-size="7.9" font-weight="bold" fill="#222" text-anchor="start" >C3</text><text x="280" y="267.5" font-family="Liberation Sans" font-size="7.9" font-weight="bold" fill="#222" text-anchor="start" >2.2µF</text><line x1="273" y1="285" x2="273" y2="290" stroke="#333" stroke-width="1"/><path d="M267,290 h12 M269,292.3 h8 M271,294.6 h4" stroke="#333" stroke-width="0.9"/><polyline points="341,216 341,235.2" fill="none" stroke="#b6727a" stroke-width="1"/><polyline points="341,253.2 341,305" fill="none" stroke="#b6727a" stroke-width="1"/><line x1="341" y1="235.2" x2="341" y2="242.45" stroke="#333" stroke-width="1"/><line x1="341" y1="245.95" x2="341" y2="253.2" stroke="#333" stroke-width="1"/><rect x="335" y="241.85" width="12" height="1.3" fill="#333"/><rect x="335" y="245.35" width="12" height="1.3" fill="#333"/><text x="348" y="237" font-family="Liberation Sans" font-size="7.9" font-weight="bold" fill="#222" text-anchor="start" >C1</text><text x="348" y="247.5" font-family="Liberation Sans" font-size="7.9" font-weight="bold" fill="#222" text-anchor="start" >1nF</text><polyline points="341,274 435,274" fill="none" stroke="#b6727a" stroke-width="1"/><polyline points="341,274 428.5,274" fill="none" stroke="#b6727a" stroke-width="1"/><polyline points="459.5,274 484,274" fill="none" stroke="#b6727a" stroke-width="1"/><line x1="428.5" y1="274" x2="436" y2="274" stroke="#333" stroke-width="1"/><line x1="452" y1="274" x2="459.5" y2="274" stroke="#333" stroke-width="1"/><polyline points="436.00,274.00 437.33,271.40 440.00,276.60 442.67,271.40 445.33,276.60 448.00,271.40 450.67,276.60 452.00,274.00" fill="none" stroke="#333" stroke-width="0.9"/><text x="444" y="266.3" font-family="Liberation Sans" font-size="7.9" font-weight="bold" fill="#222" text-anchor="middle" >R21</text><text x="444" y="283.8" font-family="Liberation Sans" font-size="7.9" font-weight="bold" fill="#222" text-anchor="middle" >220Ω</text><polyline points="484,274 484,305.5 490,305.5" fill="none" stroke="#b6727a" stroke-width="1"/><polyline points="141,305 344.0,305" fill="none" stroke="#b6727a" stroke-width="1"/><polyline points="375.0,305 411,305" fill="none" stroke="#b6727a" stroke-width="1"/><line x1="344.0" y1="305" x2="351.5" y2="305" stroke="#333" stroke-width="1"/><line x1="367.5" y1="305" x2="375.0" y2="305" stroke="#333" stroke-width="1"/><polyline points="351.50,305.00 352.83,302.40 355.50,307.60 358.17,302.40 360.83,307.60 363.50,302.40 366.17,307.60 367.50,305.00" fill="none" stroke="#333" stroke-width="0.9"/><text x="359.5" y="298" font-family="Liberation Sans" font-size="7.9" font-weight="bold" fill="#222" text-anchor="middle" >R12</text><text x="359.5" y="315" font-family="Liberation Sans" font-size="7.9" font-weight="bold" fill="#222" text-anchor="middle" >220Ω</text><polyline points="321,305 321,319" fill="none" stroke="#b6727a" stroke-width="1"/><circle cx="321.8" cy="331" r="9.2" fill="none" stroke="#55556a" stroke-width="0.8"/><line x1="327.1" y1="324" x2="327.1" y2="338" stroke="#333" stroke-width="1.1"/><line x1="327.1" y1="331" x2="332.0" y2="331" stroke="#9a9ab0" stroke-width="0.9"/><line x1="321" y1="322.1" x2="327.1" y2="325.2" stroke="#444" stroke-width="0.9"/><line x1="327.1" y1="336.8" x2="321" y2="339.9" stroke="#444" stroke-width="0.9"/><line x1="321" y1="321.8" x2="321" y2="309.8" stroke="#444" stroke-width="1"/><line x1="321" y1="340.2" x2="321" y2="352.2" stroke="#444" stroke-width="1"/><polygon points="321.3,339.6 324.6,338.8 322.8,336.6" fill="#2020a0"/><text x="310" y="324" font-family="Liberation Sans" font-size="7.9" font-weight="bold" fill="#3b3b98" text-anchor="end" >Q7</text><text x="310" y="333.8" font-family="Liberation Sans" font-size="7.9" font-weight="bold" fill="#3b3b98" text-anchor="end" >BC550BP</text><polyline points="321,343 321,368" fill="none" stroke="#b6727a" stroke-width="1"/><polyline points="333,331 387,331" fill="none" stroke="#b6727a" stroke-width="1"/><polyline points="333,331 380.5,331" fill="none" stroke="#b6727a" stroke-width="1"/><polyline points="411.5,331 421,331" fill="none" stroke="#b6727a" stroke-width="1"/><line x1="380.5" y1="331" x2="388" y2="331" stroke="#333" stroke-width="1"/><line x1="404" y1="331" x2="411.5" y2="331" stroke="#333" stroke-width="1"/><polyline points="388.00,331.00 389.33,328.40 392.00,333.60 394.67,328.40 397.33,333.60 400.00,328.40 402.67,333.60 404.00,331.00" fill="none" stroke="#333" stroke-width="0.9"/><text x="396" y="324.3" font-family="Liberation Sans" font-size="7.9" font-weight="bold" fill="#222" text-anchor="middle" >R11</text><text x="396" y="341.3" font-family="Liberation Sans" font-size="7.9" font-weight="bold" fill="#222" text-anchor="middle" >220Ω</text><polyline points="362,331 362,333.5" fill="none" stroke="#b6727a" stroke-width="1"/><polyline points="362,364.5 362,368" fill="none" stroke="#b6727a" stroke-width="1"/><line x1="362" y1="333.5" x2="362" y2="341" stroke="#333" stroke-width="1"/><line x1="362" y1="357" x2="362" y2="364.5" stroke="#333" stroke-width="1"/><polyline points="362.00,341.00 364.60,342.33 359.40,345.00 364.60,347.67 359.40,350.33 364.60,353.00 359.40,355.67 362.00,357.00" fill="none" stroke="#333" stroke-width="0.9"/><text x="366" y="342" font-family="Liberation Sans" font-size="7.9" font-weight="bold" fill="#222" text-anchor="start" >R10</text><text x="366" y="353" font-family="Liberation Sans" font-size="7.9" font-weight="bold" fill="#222" text-anchor="start" >100Ω</text><polyline points="141,368 610,368" fill="none" stroke="#b6727a" stroke-width="1"/><polyline points="547,16 547,131" fill="none" stroke="#b6727a" stroke-width="1"/><polyline points="547,149 547,216" fill="none" stroke="#b6727a" stroke-width="1"/><line x1="547" y1="131" x2="547" y2="137.75" stroke="#333" stroke-width="1"/><line x1="547" y1="142.25" x2="547" y2="149" stroke="#333" stroke-width="1"/><rect x="541" y="137.15" width="12" height="1.3" fill="#333"/><path d="M541,143.45 Q547,141.65 553,143.45" fill="none" stroke="#333" stroke-width="1.3"/><path d="M541.2,134.15 h3.4 M542.9,132.45 v3.4" stroke="#333" stroke-width="0.8"/><text x="554" y="132" font-family="Liberation Sans" font-size="7.9" font-weight="bold" fill="#222" text-anchor="start" >C5</text><text x="554" y="142.5" font-family="Liberation Sans" font-size="7.9" font-weight="bold" fill="#222" text-anchor="start" >10000µF</text><polyline points="547,216 547,267.8" fill="none" stroke="#b6727a" stroke-width="1"/><polyline points="547,285.8 547,368" fill="none" stroke="#b6727a" stroke-width="1"/><line x1="547" y1="267.8" x2="547" y2="274.55" stroke="#333" stroke-width="1"/><line x1="547" y1="279.05" x2="547" y2="285.8" stroke="#333" stroke-width="1"/><rect x="541" y="273.95" width="12" height="1.3" fill="#333"/><path d="M541,280.25 Q547,278.45 553,280.25" fill="none" stroke="#333" stroke-width="1.3"/><path d="M541.2,270.95 h3.4 M542.9,269.25 v3.4" stroke="#333" stroke-width="0.8"/><text x="554" y="268.8" font-family="Liberation Sans" font-size="7.9" font-weight="bold" fill="#222" text-anchor="start" >C7</text><text x="554" y="278.8" font-family="Liberation Sans" font-size="7.9" font-weight="bold" fill="#222" text-anchor="start" >10000µF</text><polyline points="610,16 610,131" fill="none" stroke="#b6727a" stroke-width="1"/><line x1="610" y1="131" x2="610" y2="137" stroke="#333" stroke-width="1"/><path d="M603,137 h14 M605.5,140 h9 M603,144 h14 M605.5,147 h9" stroke="#333" stroke-width="1"/><line x1="610" y1="147" x2="610" y2="153" stroke="#333" stroke-width="1"/><polyline points="610,153 610,262" fill="none" stroke="#b6727a" stroke-width="1"/><line x1="610" y1="262" x2="610" y2="268" stroke="#333" stroke-width="1"/><path d="M603,268 h14 M605.5,271 h9 M603,275 h14 M605.5,278 h9" stroke="#333" stroke-width="1"/><line x1="610" y1="278" x2="610" y2="284" stroke="#333" stroke-width="1"/><polyline points="610,284 610,368" fill="none" stroke="#b6727a" stroke-width="1"/><text x="617" y="135" font-family="Liberation Sans" font-size="7.9" font-weight="bold" fill="#222" text-anchor="start" >V1</text><text x="617" y="145" font-family="Liberation Sans" font-size="7.9" font-weight="bold" fill="#222" text-anchor="start" >25V</text><text x="617" y="266" font-family="Liberation Sans" font-size="7.9" font-weight="bold" fill="#222" text-anchor="start" >V2</text><text x="617" y="276" font-family="Liberation Sans" font-size="7.9" font-weight="bold" fill="#222" text-anchor="start" >25V</text><circle cx="583.6" cy="216" r="1.4" fill="#8a2a2a"/><line x1="583.6" y1="216" x2="583.6" y2="222" stroke="#333" stroke-width="1"/><path d="M577.6,222 h12 M579.6,224.3 h8 M581.6,226.6 h4" stroke="#333" stroke-width="0.9"/><polyline points="652,169 652,221 700,221 700,212" fill="none" stroke="#b6727a" stroke-width="1"/><circle cx="173" cy="16" r="1.35" fill="#8a3030"/><circle cx="294" cy="16" r="1.35" fill="#8a3030"/><circle cx="421" cy="16" r="1.35" fill="#8a3030"/><circle cx="499" cy="16" r="1.35" fill="#8a3030"/><circle cx="547" cy="16" r="1.35" fill="#8a3030"/><circle cx="115" cy="153" r="1.35" fill="#8a3030"/><circle cx="173" cy="200" r="1.35" fill="#8a3030"/><circle cx="52" cy="216" r="1.35" fill="#8a3030"/><circle cx="89" cy="216" r="1.35" fill="#8a3030"/><circle cx="226" cy="216" r="1.35" fill="#8a3030"/><circle cx="141" cy="305" r="1.35" fill="#8a3030"/><circle cx="294" cy="53" r="1.35" fill="#8a3030"/><circle cx="294" cy="84" r="1.35" fill="#8a3030"/><circle cx="367" cy="84" r="1.35" fill="#8a3030"/><circle cx="325" cy="110" r="1.35" fill="#8a3030"/><circle cx="421" cy="110" r="1.35" fill="#8a3030"/><circle cx="421" cy="147" r="1.35" fill="#8a3030"/><circle cx="499" cy="147" r="1.35" fill="#8a3030"/><circle cx="273" cy="184" r="1.35" fill="#8a3030"/><circle cx="325" cy="184" r="1.35" fill="#8a3030"/><circle cx="325" cy="216" r="1.35" fill="#8a3030"/><circle cx="341" cy="216" r="1.35" fill="#8a3030"/><circle cx="457" cy="216" r="1.35" fill="#8a3030"/><circle cx="457" cy="189.5" r="1.35" fill="#8a3030"/><circle cx="457" cy="232" r="1.35" fill="#8a3030"/><circle cx="499" cy="163" r="1.35" fill="#8a3030"/><circle cx="499" cy="189.5" r="1.35" fill="#8a3030"/><circle cx="499" cy="257.6" r="1.35" fill="#8a3030"/><circle cx="547" cy="216" r="1.35" fill="#8a3030"/><circle cx="610" cy="216" r="1.35" fill="#8a3030"/><circle cx="652" cy="200" r="1.35" fill="#8a3030"/><circle cx="341" cy="274" r="1.35" fill="#8a3030"/><circle cx="321" cy="305" r="1.35" fill="#8a3030"/><circle cx="341" cy="305" r="1.35" fill="#8a3030"/><circle cx="362" cy="331" r="1.35" fill="#8a3030"/><circle cx="421" cy="331" r="1.35" fill="#8a3030"/><circle cx="205" cy="368" r="1.35" fill="#8a3030"/><circle cx="321" cy="368" r="1.35" fill="#8a3030"/><circle cx="362" cy="368" r="1.35" fill="#8a3030"/><circle cx="421" cy="368" r="1.35" fill="#8a3030"/><circle cx="499" cy="368" r="1.35" fill="#8a3030"/><circle cx="547" cy="368" r="1.35" fill="#8a3030"/><circle cx="494" cy="216" r="1.35" fill="#8a3030"/><rect x="182.5" y="125" width="45.0" height="9.5" fill="#ffffc6" stroke="#d6d69a" stroke-width="0.8"/><text x="185.5" y="132.07" font-family="Liberation Sans" font-size="5.6" fill="#333">P(avg): 435 mW</text><line x1="181.5" y1="143.8" x2="190" y2="134.5" stroke="#9fb0c8" stroke-width="0.7"/><circle cx="181.5" cy="143.8" r="4.9" fill="#eef6ea" stroke="#76a276" stroke-width="0.9"/><text x="181.5" y="146.10000000000002" font-family="Liberation Sans" font-size="6.2" fill="#5a8f5a" text-anchor="middle">W</text><rect x="221.8" y="191.3" width="43.0" height="10.199999999999989" fill="#ffffc6" stroke="#d6d69a" stroke-width="0.8"/><text x="224.8" y="198.916" font-family="Liberation Sans" font-size="5.6" fill="#333">P(avg): 411 mW</text><line x1="217.7" y1="207" x2="224" y2="201.5" stroke="#9fb0c8" stroke-width="0.7"/><circle cx="217.7" cy="207" r="4.9" fill="#eef6ea" stroke="#76a276" stroke-width="0.9"/><text x="217.7" y="209.3" font-family="Liberation Sans" font-size="6.2" fill="#5a8f5a" text-anchor="middle">W</text><rect x="147.6" y="258" width="44.80000000000001" height="10.699999999999989" fill="#ffffc6" stroke="#d6d69a" stroke-width="0.8"/><text x="150.6" y="266.006" font-family="Liberation Sans" font-size="5.6" fill="#333">P(avg): 305 mW</text><line x1="154" y1="234.3" x2="150" y2="258" stroke="#9fb0c8" stroke-width="0.7"/><circle cx="154" cy="234.3" r="4.9" fill="#eef6ea" stroke="#76a276" stroke-width="0.9"/><text x="154" y="236.60000000000002" font-family="Liberation Sans" font-size="6.2" fill="#5a8f5a" text-anchor="middle">W</text><rect x="432.5" y="23" width="42.5" height="12" fill="#ffffc6" stroke="#d6d69a" stroke-width="0.8"/><text x="435.5" y="32.02" font-family="Liberation Sans" font-size="5.6" fill="#333">P(avg): 18.1 W</text><line x1="428" y1="65" x2="438" y2="35" stroke="#9fb0c8" stroke-width="0.7"/><circle cx="428" cy="65" r="4.9" fill="#eef6ea" stroke="#76a276" stroke-width="0.9"/><text x="428" y="67.3" font-family="Liberation Sans" font-size="6.2" fill="#5a8f5a" text-anchor="middle">W</text><rect x="511" y="30" width="42" height="10.5" fill="#ffffc6" stroke="#d6d69a" stroke-width="0.8"/><text x="514" y="37.85" font-family="Liberation Sans" font-size="5.6" fill="#333">P(avg): 18.1 W</text><line x1="506.75" y1="65" x2="516" y2="40.5" stroke="#9fb0c8" stroke-width="0.7"/><circle cx="506.75" cy="65" r="4.9" fill="#eef6ea" stroke="#76a276" stroke-width="0.9"/><text x="506.75" y="67.3" font-family="Liberation Sans" font-size="6.2" fill="#5a8f5a" text-anchor="middle">W</text><rect x="502" y="237" width="42" height="10" fill="#ffffc6" stroke="#d6d69a" stroke-width="0.8"/><text x="505" y="244.46" font-family="Liberation Sans" font-size="5.6" fill="#333">P(avg): 10.2 W</text><line x1="527.8" y1="224" x2="522" y2="237" stroke="#9fb0c8" stroke-width="0.7"/><circle cx="527.8" cy="224" r="4.9" fill="#eef6ea" stroke="#76a276" stroke-width="0.9"/><text x="527.8" y="226.3" font-family="Liberation Sans" font-size="6.2" fill="#5a8f5a" text-anchor="middle">W</text><rect x="436" y="316" width="43" height="11.5" fill="#ffffc6" stroke="#d6d69a" stroke-width="0.8"/><text x="439" y="324.63" font-family="Liberation Sans" font-size="5.6" fill="#333">P(avg): 19.9 W</text><circle cx="428" cy="314.5" r="4.9" fill="#eef6ea" stroke="#76a276" stroke-width="0.9"/><text x="428" y="316.8" font-family="Liberation Sans" font-size="6.2" fill="#5a8f5a" text-anchor="middle">W</text><rect x="446" y="331" width="41.5" height="11.5" fill="#ffffc6" stroke="#d6d69a" stroke-width="0.8"/><text x="449" y="339.63" font-family="Liberation Sans" font-size="5.6" fill="#333">P(avg): 19.8 W</text><line x1="507" y1="313.75" x2="487.5" y2="334" stroke="#9fb0c8" stroke-width="0.7"/><circle cx="507" cy="313.75" r="4.9" fill="#eef6ea" stroke="#76a276" stroke-width="0.9"/><text x="507" y="316.05" font-family="Liberation Sans" font-size="6.2" fill="#5a8f5a" text-anchor="middle">W</text><rect x="551" y="155" width="46.5" height="32.5" fill="#ffffc6" stroke="#d6d69a" stroke-width="0.8"/><text x="554" y="162.7525" font-family="Liberation Sans" font-size="5.6" fill="#333">V(p-p): 25.5 V</text><text x="554" y="170.1275" font-family="Liberation Sans" font-size="5.6" fill="#333">V(rms): 9.01 V</text><text x="554" y="177.5025" font-family="Liberation Sans" font-size="5.6" fill="#333">V(dc): -12.1 mV</text><text x="554" y="184.8775" font-family="Liberation Sans" font-size="5.6" fill="#333">V(freq): 1.00 kHz</text><line x1="512.4" y1="191.5" x2="551" y2="187.5" stroke="#9fb0c8" stroke-width="0.7"/><circle cx="512.4" cy="191.5" r="4.9" fill="#eef6ea" stroke="#76a276" stroke-width="0.9"/><text x="512.4" y="193.8" font-family="Liberation Sans" font-size="6.2" fill="#5a8f5a" text-anchor="middle">V</text><rect x="567" y="67" width="36" height="25.5" fill="#ffffc6" stroke="#d6d69a" stroke-width="0.8"/><text x="570" y="74.85" font-family="Liberation Sans" font-size="5.6" fill="#333">V(p-p): 0 V</text><text x="570" y="82.35" font-family="Liberation Sans" font-size="5.6" fill="#333">V(rms): 0 V</text><text x="570" y="89.85" font-family="Liberation Sans" font-size="5.6" fill="#333">V(dc): 25.0 V</text><line x1="602" y1="102" x2="610" y2="110" stroke="#8ab08a" stroke-width="0.8"/><circle cx="602" cy="102" r="4.9" fill="#eef6ea" stroke="#76a276" stroke-width="0.9"/><text x="602" y="104.3" font-family="Liberation Sans" font-size="6.2" fill="#5a8f5a" text-anchor="middle">V</text><text x="581" y="108.7" font-family="Liberation Sans" font-size="7.9" font-weight="bold" fill="#222" text-anchor="start" >PR1</text><rect x="564.5" y="314.5" width="38.0" height="25.0" fill="#ffffc6" stroke="#d6d69a" stroke-width="0.8"/><text x="567.5" y="322.22" font-family="Liberation Sans" font-size="5.6" fill="#333">V(p-p): 0 V</text><text x="567.5" y="329.55333333333334" font-family="Liberation Sans" font-size="5.6" fill="#333">V(rms): 0 V</text><text x="567.5" y="336.88666666666666" font-family="Liberation Sans" font-size="5.6" fill="#333">V(dc): -25.0 V</text><line x1="601" y1="349.5" x2="610" y2="358" stroke="#8ab08a" stroke-width="0.8"/><circle cx="601" cy="349.5" r="4.9" fill="#eef6ea" stroke="#76a276" stroke-width="0.9"/><text x="601" y="351.8" font-family="Liberation Sans" font-size="6.2" fill="#5a8f5a" text-anchor="middle">V</text><text x="581" y="355.5" font-family="Liberation Sans" font-size="7.9" font-weight="bold" fill="#222" text-anchor="start" >PR2</text><rect x="625.75" y="14.5" width="44.75" height="32.5" fill="#ffffc6" stroke="#d6d69a" stroke-width="0.8"/><text x="628.75" y="22.2525" font-family="Liberation Sans" font-size="5.6" fill="#333">I(p-p): 2.10 A</text><text x="628.75" y="29.627499999999998" font-family="Liberation Sans" font-size="5.6" fill="#333">I(rms): 1.94 A</text><text x="628.75" y="37.0025" font-family="Liberation Sans" font-size="5.6" fill="#333">I(dc): -1.79 A</text><text x="628.75" y="44.3775" font-family="Liberation Sans" font-size="5.6" fill="#333">I(freq): 1.00 kHz</text><line x1="617.5" y1="54.25" x2="626" y2="47" stroke="#9fb0c8" stroke-width="0.7"/><line x1="617.5" y1="54.25" x2="610" y2="62" stroke="#8ab08a" stroke-width="0.8"/><circle cx="617.5" cy="54.25" r="4.9" fill="#eef6ea" stroke="#76a276" stroke-width="0.9"/><text x="617.5" y="56.55" font-family="Liberation Sans" font-size="6.2" fill="#5a8f5a" text-anchor="middle">A</text><path d="M607.5,59.5 L610,63 L612.5,59.5" fill="none" stroke="#6da06d" stroke-width="0.9"/><text x="628" y="61.3" font-family="Liberation Sans" font-size="7.9" font-weight="bold" fill="#222" text-anchor="start" >PR9</text><rect x="625" y="294" width="45" height="32" fill="#ffffc6" stroke="#d6d69a" stroke-width="0.8"/><text x="628" y="301.655" font-family="Liberation Sans" font-size="5.6" fill="#333">I(p-p): 1.09 A</text><text x="628" y="308.905" font-family="Liberation Sans" font-size="5.6" fill="#333">I(rms): 1.83 A</text><text x="628" y="316.155" font-family="Liberation Sans" font-size="5.6" fill="#333">I(dc): -1.79 A</text><text x="628" y="323.405" font-family="Liberation Sans" font-size="5.6" fill="#333">I(freq): 1.00 kHz</text><line x1="618" y1="328" x2="626" y2="326" stroke="#9fb0c8" stroke-width="0.7"/><line x1="618" y1="328" x2="610" y2="336" stroke="#8ab08a" stroke-width="0.8"/><circle cx="618" cy="328" r="4.9" fill="#eef6ea" stroke="#76a276" stroke-width="0.9"/><text x="618" y="330.3" font-family="Liberation Sans" font-size="6.2" fill="#5a8f5a" text-anchor="middle">A</text><path d="M607.5,333.5 L610,337 L612.5,333.5" fill="none" stroke="#6da06d" stroke-width="0.9"/><text x="628" y="334.7" font-family="Liberation Sans" font-size="7.9" font-weight="bold" fill="#222" text-anchor="start" >PR10</text><rect x="5" y="163.5" width="30.8" height="20" fill="#c9dcc6" stroke="#555" stroke-width="1"/><rect x="6.5" y="165.5" width="8.5" height="6.5" fill="#dde8da"/><rect x="16.5" y="165.5" width="8.5" height="6.5" fill="#dde8da"/><rect x="26.5" y="165.5" width="8.5" height="6.5" fill="#dde8da"/><text x="10.7" y="170.8" font-family="Liberation Sans" font-size="3.4" fill="#445" text-anchor="middle">∿∿</text><text x="20.7" y="170.8" font-family="Liberation Sans" font-size="3.4" fill="#445" text-anchor="middle">/\/\</text><text x="30.7" y="170.8" font-family="Liberation Sans" font-size="3.4" fill="#445" text-anchor="middle">⊓⊓</text><text x="20.5" y="177.3" font-family="Liberation Sans" font-size="3.6" fill="#4a6a4a" text-anchor="middle">COM</text><text x="10.4" y="177.3" font-family="Liberation Sans" font-size="4" fill="#4a6a4a" text-anchor="middle">+</text><text x="30.7" y="177.3" font-family="Liberation Sans" font-size="4" fill="#4a6a4a" text-anchor="middle">−</text><circle cx="10.4" cy="180.5" r="1.1" fill="none" stroke="#333" stroke-width="0.8"/><circle cx="20.5" cy="180.5" r="1.1" fill="none" stroke="#333" stroke-width="0.8"/><circle cx="30.7" cy="180.5" r="1.1" fill="none" stroke="#333" stroke-width="0.8"/><line x1="10.4" y1="181.5" x2="10.4" y2="190" stroke="#333" stroke-width="1"/><line x1="20.5" y1="181.5" x2="20.5" y2="194" stroke="#333" stroke-width="1"/><line x1="30.7" y1="181.5" x2="30.7" y2="189" stroke="#333" stroke-width="1"/><path d="M14.5,194 h12 M16.5,196.3 h8 M18.5,198.6 h4" stroke="#555" stroke-width="0.9"/><text x="20" y="160.5" font-family="Liberation Serif" font-size="7.8" font-weight="bold" fill="#333" text-anchor="middle">XFG1</text><rect x="647" y="131.6" width="57.4" height="41.6" fill="#c7dcc2" stroke="#555" stroke-width="1"/><rect x="650" y="134" width="34.7" height="25.7" fill="#b4b4b4"/><path d="M651.5,146 C655,131 663,131 667,144 S 678,158 683,145" fill="none" stroke="#222" stroke-width="0.9"/><path d="M651.5,148.5 C655,134 663,134 667,147 S 678,161 683,148" fill="none" stroke="#222" stroke-width="0.9"/><text x="697" y="147" font-family="Liberation Sans" font-size="3.3" fill="#333" text-anchor="middle">Ext Trig</text><circle cx="699" cy="152" r="1.4" fill="#222"/><path d="M699,152 v4 h8 M699,152 h8" fill="none" stroke="#222" stroke-width="0.8"/><text x="652" y="163.5" font-family="Liberation Sans" font-size="3.3" fill="#333" text-anchor="middle">A</text><text x="673" y="163.5" font-family="Liberation Sans" font-size="3.3" fill="#333" text-anchor="middle">B</text><circle cx="652" cy="168.8" r="1.5" fill="#222"/><path d="M652,168.8 h3.3 v8 M650,171 " fill="none" stroke="#222" stroke-width="0.8"/><path d="M648,171 L652,168.8 M655.3,171 v6" fill="none" stroke="#222" stroke-width="0.8"/><circle cx="673" cy="168.8" r="1.5" fill="#222"/><path d="M673,168.8 h3.3 v8 M671,171 " fill="none" stroke="#222" stroke-width="0.8"/><path d="M669,171 L673,168.8 M676.3,171 v6" fill="none" stroke="#222" stroke-width="0.8"/><text x="675.5" y="128" font-family="Liberation Serif" font-size="8" fill="#333" text-anchor="middle">XSC1</text><rect x="673" y="200" width="31.4" height="15.8" fill="#c7dcc2" stroke="#555" stroke-width="1"/><rect x="676" y="202.5" width="25" height="5.5" fill="#b8c8b4"/><text x="688.5" y="207" font-family="Liberation Sans" font-size="4" fill="#333" text-anchor="middle">THD</text><rect x="677" y="209.8" width="3.5" height="3.5" fill="#8a9a88" stroke="#333" stroke-width="0.6"/><rect x="682" y="209.8" width="3.5" height="3.5" fill="#8a9a88" stroke="#333" stroke-width="0.6"/><rect x="687" y="209.8" width="3.5" height="3.5" fill="#8a9a88" stroke="#333" stroke-width="0.6"/><circle cx="700" cy="211.5" r="1.3" fill="#333"/><text x="689" y="196.5" font-family="Liberation Serif" font-size="8" fill="#333" text-anchor="middle">XDA1</text><rect x="802" y="0" width="11" height="496" fill="#fff"/><line x1="801.5" y1="0" x2="801.5" y2="496" stroke="#a8a8a8"/><line x1="812.5" y1="0" x2="812.5" y2="496" stroke="#a8a8a8"/><line x1="802" y1="31.5" x2="812" y2="31.5" stroke="#a8a8a8"/><line x1="802" y1="87.5" x2="812" y2="87.5" stroke="#a8a8a8"/><line x1="802" y1="143.5" x2="812" y2="143.5" stroke="#a8a8a8"/><line x1="802" y1="199.5" x2="812" y2="199.5" stroke="#a8a8a8"/><line x1="802" y1="255.5" x2="812" y2="255.5" stroke="#a8a8a8"/><line x1="802" y1="311.5" x2="812" y2="311.5" stroke="#a8a8a8"/><line x1="802" y1="367.5" x2="812" y2="367.5" stroke="#a8a8a8"/><line x1="802" y1="423.5" x2="812" y2="423.5" stroke="#a8a8a8"/><line x1="802" y1="479.5" x2="812" y2="479.5" stroke="#a8a8a8"/><text transform="translate(805.5,3) rotate(90)" font-family="Liberation Sans" font-size="5.5" fill="#9a9a9a" text-anchor="middle">A</text><text transform="translate(805.5,59) rotate(90)" font-family="Liberation Sans" font-size="5.5" fill="#9a9a9a" text-anchor="middle">B</text><text transform="translate(805.5,115) rotate(90)" font-family="Liberation Sans" font-size="5.5" fill="#9a9a9a" text-anchor="middle">C</text><text transform="translate(805.5,171) rotate(90)" font-family="Liberation Sans" font-size="5.5" fill="#9a9a9a" text-anchor="middle">D</text><text transform="translate(805.5,227) rotate(90)" font-family="Liberation Sans" font-size="5.5" fill="#9a9a9a" text-anchor="middle">E</text><text transform="translate(805.5,283) rotate(90)" font-family="Liberation Sans" font-size="5.5" fill="#9a9a9a" text-anchor="middle">F</text><text transform="translate(805.5,339) rotate(90)" font-family="Liberation Sans" font-size="5.5" fill="#9a9a9a" text-anchor="middle">G</text><text transform="translate(805.5,395) rotate(90)" font-family="Liberation Sans" font-size="5.5" fill="#9a9a9a" text-anchor="middle">H</text><text transform="translate(805.5,451) rotate(90)" font-family="Liberation Sans" font-size="5.5" fill="#9a9a9a" text-anchor="middle">I</text><defs><linearGradient id="sh" x1="0" x2="1" y1="0" y2="0"><stop offset="0" stop-color="#7c7c7c"/><stop offset="0.4" stop-color="#9a9a9a"/><stop offset="1" stop-color="#ababab"/></linearGradient></defs><rect x="813" y="0" width="161" height="496" fill="#ababab"/><rect x="813" y="0" width="14" height="496" fill="url(#sh)"/><rect x="973.5" y="0" width="2" height="530" fill="#c2c2c2"/><rect x="975.5" y="0" width="8.5" height="530" fill="#d6d6d6"/><rect x="984" y="0" width="3" height="530" fill="#f4f4f4"/><rect x="987" y="0" width="1" height="530" fill="#cfcfcf"/><rect x="988" y="0" width="12" height="530" fill="#f6f6f6"/><rect x="991" y="1" width="9" height="3" fill="#b8b8b8"/><rect x="991" y="5.5" width="8" height="1.6" fill="#c8c8c8"/><rect x="991" y="13.5" width="9" height="4" fill="#b4b4b4"/><rect x="991" y="19.0" width="8" height="1.6" fill="#c8c8c8"/><rect x="991" y="26" width="9" height="5" fill="#9a9a9a"/><rect x="991" y="32.5" width="8" height="1.6" fill="#c8c8c8"/><rect x="991" y="38.5" width="9" height="4.5" fill="#7e7e7e"/><rect x="991" y="44.5" width="8" height="1.6" fill="#c8c8c8"/><rect x="991" y="51" width="9" height="4" fill="#858585"/><rect x="991" y="56.5" width="8" height="1.6" fill="#c8c8c8"/><rect x="991" y="63.5" width="9" height="4" fill="#8a8a8a"/><rect x="991" y="69.0" width="8" height="1.6" fill="#c8c8c8"/><rect x="991" y="76" width="9" height="4" fill="#8a8a8a"/><rect x="991" y="81.5" width="8" height="1.6" fill="#c8c8c8"/><rect x="991" y="88.5" width="9" height="5" fill="#8a8a8a"/><rect x="991" y="95.0" width="8" height="1.6" fill="#c8c8c8"/><rect x="991" y="101" width="9" height="4.5" fill="#8f8f8f"/><rect x="991" y="107.0" width="8" height="1.6" fill="#c8c8c8"/><rect x="991" y="113.5" width="9" height="4" fill="#909090"/><rect x="991" y="119.0" width="8" height="1.6" fill="#c8c8c8"/><rect x="991" y="126" width="9" height="4" fill="#8a8a8a"/><rect x="991" y="131.5" width="8" height="1.6" fill="#c8c8c8"/><rect x="991" y="138.5" width="9" height="4" fill="#9a9a9a"/><rect x="991" y="144.0" width="8" height="1.6" fill="#c8c8c8"/><rect x="991" y="151" width="9" height="3" fill="#a8a8a8"/><rect x="991" y="155.5" width="8" height="1.6" fill="#c8c8c8"/><rect x="991" y="163.5" width="9" height="4" fill="#a0a0a0"/><rect x="991" y="169.0" width="8" height="1.6" fill="#c8c8c8"/><rect x="991" y="176" width="9" height="4" fill="#b0b0b0"/><rect x="991" y="181.5" width="8" height="1.6" fill="#c8c8c8"/><rect x="991" y="188.5" width="9" height="4" fill="#b0b0b0"/><rect x="991" y="194.0" width="8" height="1.6" fill="#c8c8c8"/><line x1="988" y1="197.5" x2="1000" y2="197.5" stroke="#d4d4d4"/><line x1="988" y1="221.5" x2="1000" y2="221.5" stroke="#d4d4d4"/><line x1="988" y1="245.5" x2="1000" y2="245.5" stroke="#d4d4d4"/><line x1="988" y1="263.5" x2="1000" y2="263.5" stroke="#d4d4d4"/><rect x="991.5" y="202" width="7.5" height="8" fill="#8f8f8f"/><circle cx="994" cy="214.5" r="0.8" fill="#888"/><path d="M991,231 l4,-3 l4,3 M991,233 l4,-3 l4,3" fill="none" stroke="#9a9a9a" stroke-width="0.8"/><circle cx="994" cy="238" r="0.8" fill="#888"/><path d="M992,256 q1,-6 3,-7 q2,-1 3,1 M991,253 h5" fill="none" stroke="#777" stroke-width="0.9"/><circle cx="993" cy="256" r="1.5" fill="none" stroke="#777" stroke-width="0.8"/><rect x="0" y="495.5" width="974" height="10" fill="#ececec"/><rect x="64" y="496" width="910" height="9" fill="#cdcdcd"/><path d="M5.8,497.8 L3.6,500.4 L5.8,503" fill="none" stroke="#555" stroke-width="0.9"/><rect x="0" y="505.5" width="974" height="25" fill="#f0f0f0"/><rect x="83" y="509.5" width="891" height="25" fill="#f2f2f2" stroke="#9a9a9a" stroke-width="1"/><rect x="0" y="505.5" width="83" height="17.5" fill="#f3f3f3"/><path d="M0,522.5 H82.5 V509" fill="none" stroke="#6a6a6a" stroke-width="1"/><rect x="0.5" y="512" width="8" height="9" fill="#fff" stroke="#777" stroke-width="0.7"/><rect x="0" y="512" width="4" height="9" fill="#9a6a6a"/><text x="12.5" y="518.8" font-family="Liberation Sans" font-size="7.6" fill="#333" transform="translate(12.5,0) scale(0.93,1) translate(-12.5,0)">Aleph-3-Amp (10Вт) *</text><rect x="0" y="523.5" width="974" height="7" fill="#f0f0f0"/><rect x="9.5" y="323.0" width="123.0" height="140.0" fill="rgba(0,0,0,0.1)" /><rect x="8.5" y="322.0" width="125.0" height="142.0" fill="rgba(0,0,0,0.07)" /><rect x="7.5" y="321.0" width="127.0" height="144.0" fill="rgba(0,0,0,0.04)" /><rect x="8.5" y="321.5" width="122.0" height="139.0" fill="#f0f0f0" stroke="#b9b9b9" stroke-width="1" /><rect x="9.0" y="322.0" width="121.0" height="17.5" fill="#fff" /><text transform="translate(14,333.3) scale(0.96,1)" font-family="Liberation Sans" font-size="7.1" fill="#9a9a9a" text-anchor="start">Function generator-XFG1</text><path d="M117.7,326.59999999999997 L124.89999999999999,333.8 M124.89999999999999,326.59999999999997 L117.7,333.8" stroke="#777" stroke-width="0.9"/><rect x="14.5" y="340.5" width="111.5" height="89" fill="#f4f4f4" stroke="#e2e2e2" stroke-width="0.8" /><text transform="translate(15.8,346.3) scale(0.9,1)" font-family="Liberation Sans" font-size="6.9" fill="#000" text-anchor="start">Waveforms</text><rect x="17.3" y="350.7" width="32.9" height="7.9" fill="#cce4f7" stroke="#3d8ad6" stroke-width="0.8" /><text transform="translate(33.75,357.02599999999995) scale(0.9,1)" font-family="Liberation Sans" font-size="6.6" fill="#000" text-anchor="middle"></text><rect x="54.1" y="350.7" width="31.9" height="7.9" fill="#e1e1e1" stroke="#c4c4c4" stroke-width="0.8" /><text transform="translate(70.05,357.02599999999995) scale(0.9,1)" font-family="Liberation Sans" font-size="6.6" fill="#000" text-anchor="middle"></text><rect x="89.8" y="350.7" width="32.2" height="7.9" fill="#e1e1e1" stroke="#c4c4c4" stroke-width="0.8" /><text transform="translate(105.9,357.02599999999995) scale(0.9,1)" font-family="Liberation Sans" font-size="6.6" fill="#000" text-anchor="middle"></text><path d="M21.00,353.33 L21.66,353.03 L22.32,352.76 L22.97,352.53 L23.63,352.36 L24.29,352.25 L24.95,352.20 L25.60,352.22 L26.26,352.30 L26.92,352.45 L27.57,352.65 L28.23,352.90 L28.89,353.19 L29.55,353.50 L30.20,353.83 L30.86,354.15 L31.52,354.46 L32.18,354.74 L32.84,354.99 L33.49,355.18 L34.15,355.31 L34.81,355.39 L35.47,355.39 L36.12,355.34 L36.78,355.21 L37.44,355.03 L38.09,354.80 L38.75,354.52 L39.41,354.22 L40.07,353.90 L40.73,353.57 L41.38,353.26 L42.04,352.96 L42.70,352.70 L43.36,352.49 L44.01,352.33 L44.67,352.23 L45.33,352.20 L45.98,352.23 L46.64,352.33 L47.30,352.49" fill="none" stroke="#222" stroke-width="0.8"/><path d="M58.60,354.00 L59.20,353.50 L59.81,353.08 L60.41,352.80 L61.02,352.70 L61.62,352.80 L62.23,353.08 L62.84,353.50 L63.44,354.00 L64.05,354.50 L64.65,354.92 L65.25,355.20 L65.86,355.30 L66.47,355.20 L67.07,354.92 L67.67,354.50 L68.28,354.00 L68.89,353.50 L69.49,353.08 L70.09,352.80 L70.70,352.70 L71.31,352.80 L71.91,353.08 L72.52,353.50 L73.12,354.00 L73.72,354.50 L74.33,354.92 L74.94,355.20 L75.54,355.30 L76.14,355.20 L76.75,354.92 L77.36,354.50 L77.96,354.00 L78.56,353.50 L79.17,353.08 L79.78,352.80 L80.38,352.70 L80.98,352.80 L81.59,353.08 L82.19,353.50 L82.80,354.00" fill="none" stroke="#222" stroke-width="0.8"/><path d="M92.6,356 H97 V352.6 H102 V356 H106 V352.6 H111 V356 H118.2" fill="none" stroke="#222" stroke-width="0.8"/><text transform="translate(15.8,367.2) scale(0.9,1)" font-family="Liberation Sans" font-size="6.9" fill="#000" text-anchor="start">Signal options</text><text transform="translate(17,378.4) scale(0.9,1)" font-family="Liberation Sans" font-size="6.9" fill="#000" text-anchor="start">Frequency:</text><rect x="55.8" y="370.8" width="47.3" height="10.8" fill="#fff" stroke="#444" stroke-width="0.9" /><rect x="103.1" y="370.8" width="21.4" height="10.8" fill="#fff" stroke="#444" stroke-width="0.9" /><text transform="translate(58.8,378.2) scale(0.9,1)" font-family="Liberation Sans" font-size="6.8" fill="#000" text-anchor="start">1</text><text transform="translate(105.5,378.2) scale(0.9,1)" font-family="Liberation Sans" font-size="6.8" fill="#000" text-anchor="start">kHz</text><text transform="translate(17,389.7) scale(0.9,1)" font-family="Liberation Sans" font-size="6.9" fill="#555" text-anchor="start">Duty cycle:</text><rect x="55.6" y="381.6" width="47.5" height="11" fill="#f0f0f0" /><text transform="translate(58.8,389.5) scale(0.9,1)" font-family="Liberation Sans" font-size="6.8" fill="#9a9a9a" text-anchor="start">50</text><rect x="103.1" y="381.6" width="21.5" height="11" fill="#f0f0f0" /><text transform="translate(108,389.5) scale(0.9,1)" font-family="Liberation Sans" font-size="6.8" fill="#9a9a9a" text-anchor="start">%</text><text transform="translate(17,401.2) scale(0.9,1)" font-family="Liberation Sans" font-size="6.9" fill="#000" text-anchor="start">Amplitude:</text><rect x="55.8" y="393.7" width="47.3" height="10.8" fill="#fff" stroke="#444" stroke-width="0.9" /><rect x="103.1" y="393.7" width="21.4" height="10.8" fill="#fff" stroke="#444" stroke-width="0.9" /><text transform="translate(58.8,401.0) scale(0.9,1)" font-family="Liberation Sans" font-size="6.8" fill="#000" text-anchor="start">1.18</text><text transform="translate(105.5,401.0) scale(0.9,1)" font-family="Liberation Sans" font-size="6.8" fill="#000" text-anchor="start">Vp</text><text transform="translate(17,412.2) scale(0.9,1)" font-family="Liberation Sans" font-size="6.9" fill="#000" text-anchor="start">Offset:</text><rect x="55.8" y="404.8" width="47.3" height="10.8" fill="#fff" stroke="#444" stroke-width="0.9" /><rect x="103.1" y="404.8" width="21.4" height="10.8" fill="#fff" stroke="#444" stroke-width="0.9" /><text transform="translate(58.8,412.0) scale(0.9,1)" font-family="Liberation Sans" font-size="6.8" fill="#000" text-anchor="start">0</text><text transform="translate(105.5,412.0) scale(0.9,1)" font-family="Liberation Sans" font-size="6.8" fill="#000" text-anchor="start">V</text><rect x="32.3" y="419.3" width="71.2" height="12" fill="#d9d9d9" stroke="#d0d0d0" stroke-width="0.6" /><text transform="translate(67.9,427.8) scale(0.9,1)" font-family="Liberation Sans" font-size="6.6" fill="#a0a0a0" text-anchor="middle">Set rise/Fall time</text><line x1="9" y1="433.8" x2="130" y2="433.8" stroke="#dcdcdc" stroke-width="0.8"/><text transform="translate(24.6,447.5) scale(0.9,1)" font-family="Liberation Sans" font-size="7.6" fill="#000" text-anchor="middle">+</text><text transform="translate(67.8,445) scale(0.9,1)" font-family="Liberation Sans" font-size="6.8" fill="#000" text-anchor="middle">Common</text><text transform="translate(112.4,447) scale(0.9,1)" font-family="Liberation Sans" font-size="7" fill="#000" text-anchor="middle">−</text><circle cx="24.6" cy="450.5" r="2.3" fill="#e8e8e8" stroke="#b8b8b8" stroke-width="0.7"/><circle cx="24.6" cy="450.5" r="0.8" fill="#b0b0b0"/><circle cx="64.6" cy="450.5" r="2.3" fill="#e8e8e8" stroke="#b8b8b8" stroke-width="0.7"/><circle cx="64.6" cy="450.5" r="0.8" fill="#b0b0b0"/><circle cx="112.4" cy="451.3" r="3.6" fill="#fff" stroke="#a0a0a0" stroke-width="0.8"/><rect x="128.0" y="458.0" width="0.9" height="0.9" fill="#9a9a9a"/><rect x="128.0" y="456.4" width="0.9" height="0.9" fill="#9a9a9a"/><rect x="126.4" y="458.0" width="0.9" height="0.9" fill="#9a9a9a"/><rect x="128.0" y="454.8" width="0.9" height="0.9" fill="#9a9a9a"/><rect x="126.4" y="456.4" width="0.9" height="0.9" fill="#9a9a9a"/><rect x="124.8" y="458.0" width="0.9" height="0.9" fill="#9a9a9a"/><rect x="728.7" y="136.5" width="184.0" height="128.60000000000002" fill="rgba(0,0,0,0.1)" /><rect x="727.7" y="135.5" width="186.0" height="130.60000000000002" fill="rgba(0,0,0,0.07)" /><rect x="726.7" y="134.5" width="188.0" height="132.60000000000002" fill="rgba(0,0,0,0.04)" /><rect x="727.7" y="135" width="183.0" height="127.60000000000002" fill="#f0f0f0" stroke="#b9b9b9" stroke-width="1" /><rect x="728.2" y="135.5" width="182.0" height="17" fill="#fff" /><text transform="translate(733.5,146.8) scale(0.95,1)" font-family="Liberation Sans" font-size="7.1" fill="#9a9a9a" text-anchor="start">Distortion analyzer-XDA1</text><path d="M897.9,139.9 L905.1,147.1 M905.1,139.9 L897.9,147.1" stroke="#777" stroke-width="0.9"/><rect x="728.5" y="152.5" width="181.5" height="29" fill="#f0f0f0" /><text transform="translate(818.5,159.8) scale(0.9,1)" font-family="Liberation Sans" font-size="6.8" fill="#000" text-anchor="middle">Total harmonic distortion (THD)</text><rect x="730.5" y="164" width="176.5" height="16.5" fill="#000" stroke="#8a8a8a" stroke-width="0.8" /><text transform="translate(824,176.8) scale(0.9,1)" font-family="Liberation Sans" font-size="10.8" fill="#fff" text-anchor="middle">0.017 %</text><rect x="761.6" y="182.5" width="145.4" height="51.5" fill="#f4f4f4" stroke="#e0e0e0" stroke-width="0.8" /><rect x="732.5" y="193.9" width="23" height="13.2" fill="#cce4f7" stroke="#3d8ad6" stroke-width="0.8" /><text transform="translate(744.0,202.948) scale(0.9,1)" font-family="Liberation Sans" font-size="6.8" fill="#000" text-anchor="middle">Start</text><rect x="732.5" y="213.5" width="23" height="12.5" fill="#e1e1e1" stroke="#c4c4c4" stroke-width="0.8" /><text transform="translate(744.0,222.198) scale(0.9,1)" font-family="Liberation Sans" font-size="6.8" fill="#000" text-anchor="middle">Stop</text><text transform="translate(820,199.2) scale(0.9,1)" font-family="Liberation Sans" font-size="6.8" fill="#000" text-anchor="end">Fundamental freq.</text><rect x="826" y="192" width="56" height="12" fill="#f0f0f0" stroke="#d8d8d8" stroke-width="0.8" /><text transform="translate(854,200.5) scale(0.9,1)" font-family="Liberation Sans" font-size="6.6" fill="#8a8a8a" text-anchor="middle">1</text><rect x="882" y="192" width="21" height="12" fill="#f0f0f0" stroke="#d8d8d8" stroke-width="0.8" /><text transform="translate(884.5,200.5) scale(0.9,1)" font-family="Liberation Sans" font-size="6.3" fill="#8a8a8a" text-anchor="start">kHz</text><text transform="translate(820,219.2) scale(0.9,1)" font-family="Liberation Sans" font-size="6.8" fill="#000" text-anchor="end">Resolution freq.</text><rect x="826" y="209.5" width="77" height="11.5" fill="#cfcfcf" stroke="#cfcfcf" stroke-width="0.8" /><text transform="translate(829,217.8) scale(0.9,1)" font-family="Liberation Sans" font-size="6.3" fill="#9a9a9a" text-anchor="start">100 Hz</text><path d="M893,214 l2.2,2.2 l2.2,-2.2" fill="none" stroke="#9a9a9a" stroke-width="0.8"/><rect x="826" y="221" width="77" height="12" fill="#f0f0f0" /><line x1="826" y1="221" x2="826" y2="233" stroke="#d0d0d0" stroke-width="0.8"/><text transform="translate(864,230) scale(0.9,1)" font-family="Liberation Sans" font-size="6.6" fill="#000" text-anchor="middle">100 Hz</text><text transform="translate(735,244.3) scale(0.9,1)" font-family="Liberation Sans" font-size="6.8" fill="#000" text-anchor="start">Controls</text><rect x="736.5" y="247.5" width="31" height="9.5" fill="#cce4f7" stroke="#3d8ad6" stroke-width="0.8" /><text transform="translate(752.0,254.626) scale(0.9,1)" font-family="Liberation Sans" font-size="6.6" fill="#000" text-anchor="middle">THD</text><rect x="771.5" y="247.5" width="30" height="9.5" fill="#e1e1e1" stroke="#c4c4c4" stroke-width="0.8" /><text transform="translate(786.5,254.626) scale(0.9,1)" font-family="Liberation Sans" font-size="6.6" fill="#000" text-anchor="middle">SINAD</text><rect x="806.5" y="247.5" width="30" height="9.5" fill="#d6d6d6" stroke="#d0d0d0" stroke-width="0.8" /><text transform="translate(821.5,254.626) scale(0.9,1)" font-family="Liberation Sans" font-size="6.6" fill="#a0a0a0" text-anchor="middle">Set...</text><text transform="translate(845,244.3) scale(0.9,1)" font-family="Liberation Sans" font-size="6.8" fill="#000" text-anchor="start">Display</text><rect x="843.5" y="247.5" width="12.5" height="9.5" fill="#cce4f7" stroke="#3d8ad6" stroke-width="0.8" /><text transform="translate(849.75,254.626) scale(0.9,1)" font-family="Liberation Sans" font-size="6.6" fill="#000" text-anchor="middle">%</text><rect x="860.5" y="247.5" width="13.5" height="9.5" fill="#e1e1e1" stroke="#c4c4c4" stroke-width="0.8" /><text transform="translate(867.25,254.626) scale(0.9,1)" font-family="Liberation Sans" font-size="6.6" fill="#000" text-anchor="middle">dB</text><text transform="translate(889,256.8) scale(0.9,1)" font-family="Liberation Sans" font-size="6.8" fill="#000" text-anchor="start">In</text><circle cx="899.5" cy="254.6" r="2.4" fill="#dedede" stroke="#c8c8c8" stroke-width="0.7"/><rect x="677" y="272.5" width="324" height="261" fill="rgba(0,0,0,0.1)" /><rect x="676" y="271.5" width="326" height="263" fill="rgba(0,0,0,0.07)" /><rect x="675" y="270.5" width="328" height="265" fill="rgba(0,0,0,0.04)" /><rect x="676" y="271" width="323" height="260" fill="#f0f0f0" stroke="#9a9a9a" stroke-width="1" /><rect x="676.5" y="271.5" width="322" height="18.5" fill="#fff" /><text transform="translate(682,283.6) scale(0.95,1)" font-family="Liberation Sans" font-size="7.1" fill="#111" text-anchor="start">Oscilloscope-XSC1</text><path d="M984.9,276.7 L992.1,283.90000000000003 M992.1,276.7 L984.9,283.90000000000003" stroke="#444" stroke-width="0.9"/><rect x="677" y="290" width="319" height="144" fill="#000" /><line x1="713.90" y1="295" x2="713.90" y2="429" stroke="#9a9a9a" stroke-width="0.8" stroke-dasharray="2,2"/><line x1="744.80" y1="295" x2="744.80" y2="429" stroke="#9a9a9a" stroke-width="0.8" stroke-dasharray="2,2"/><line x1="775.70" y1="295" x2="775.70" y2="429" stroke="#9a9a9a" stroke-width="0.8" stroke-dasharray="2,2"/><line x1="806.60" y1="295" x2="806.60" y2="429" stroke="#9a9a9a" stroke-width="0.8" stroke-dasharray="2,2"/><line x1="868.40" y1="295" x2="868.40" y2="429" stroke="#9a9a9a" stroke-width="0.8" stroke-dasharray="2,2"/><line x1="899.30" y1="295" x2="899.30" y2="429" stroke="#9a9a9a" stroke-width="0.8" stroke-dasharray="2,2"/><line x1="930.20" y1="295" x2="930.20" y2="429" stroke="#9a9a9a" stroke-width="0.8" stroke-dasharray="2,2"/><line x1="961.10" y1="295" x2="961.10" y2="429" stroke="#9a9a9a" stroke-width="0.8" stroke-dasharray="2,2"/><line x1="683" y1="317.33" x2="992" y2="317.33" stroke="#9a9a9a" stroke-width="0.8" stroke-dasharray="2,2"/><line x1="683" y1="339.67" x2="992" y2="339.67" stroke="#9a9a9a" stroke-width="0.8" stroke-dasharray="2,2"/><line x1="683" y1="384.33" x2="992" y2="384.33" stroke="#9a9a9a" stroke-width="0.8" stroke-dasharray="2,2"/><line x1="683" y1="406.67" x2="992" y2="406.67" stroke="#9a9a9a" stroke-width="0.8" stroke-dasharray="2,2"/><rect x="683" y="295" width="309" height="134" fill="none" stroke="#d8d8d8" stroke-width="0.8"/><line x1="683" y1="362" x2="992" y2="362" stroke="#e8e8e8" stroke-width="1"/><line x1="837.50" y1="295" x2="837.50" y2="429" stroke="#c8c8c8" stroke-width="0.9" stroke-dasharray="2,2"/><line x1="683.00" y1="360.8" x2="683.00" y2="363.2" stroke="#e8e8e8" stroke-width="0.7"/><line x1="689.18" y1="360.8" x2="689.18" y2="363.2" stroke="#e8e8e8" stroke-width="0.7"/><line x1="695.36" y1="360.8" x2="695.36" y2="363.2" stroke="#e8e8e8" stroke-width="0.7"/><line x1="701.54" y1="360.8" x2="701.54" y2="363.2" stroke="#e8e8e8" stroke-width="0.7"/><line x1="707.72" y1="360.8" x2="707.72" y2="363.2" stroke="#e8e8e8" stroke-width="0.7"/><line x1="713.90" y1="360.8" x2="713.90" y2="363.2" stroke="#e8e8e8" stroke-width="0.7"/><line x1="720.08" y1="360.8" x2="720.08" y2="363.2" stroke="#e8e8e8" stroke-width="0.7"/><line x1="726.26" y1="360.8" x2="726.26" y2="363.2" stroke="#e8e8e8" stroke-width="0.7"/><line x1="732.44" y1="360.8" x2="732.44" y2="363.2" stroke="#e8e8e8" stroke-width="0.7"/><line x1="738.62" y1="360.8" x2="738.62" y2="363.2" stroke="#e8e8e8" stroke-width="0.7"/><line x1="744.80" y1="360.8" x2="744.80" y2="363.2" stroke="#e8e8e8" stroke-width="0.7"/><line x1="750.98" y1="360.8" x2="750.98" y2="363.2" stroke="#e8e8e8" stroke-width="0.7"/><line x1="757.16" y1="360.8" x2="757.16" y2="363.2" stroke="#e8e8e8" stroke-width="0.7"/><line x1="763.34" y1="360.8" x2="763.34" y2="363.2" stroke="#e8e8e8" stroke-width="0.7"/><line x1="769.52" y1="360.8" x2="769.52" y2="363.2" stroke="#e8e8e8" stroke-width="0.7"/><line x1="775.70" y1="360.8" x2="775.70" y2="363.2" stroke="#e8e8e8" stroke-width="0.7"/><line x1="781.88" y1="360.8" x2="781.88" y2="363.2" stroke="#e8e8e8" stroke-width="0.7"/><line x1="788.06" y1="360.8" x2="788.06" y2="363.2" stroke="#e8e8e8" stroke-width="0.7"/><line x1="794.24" y1="360.8" x2="794.24" y2="363.2" stroke="#e8e8e8" stroke-width="0.7"/><line x1="800.42" y1="360.8" x2="800.42" y2="363.2" stroke="#e8e8e8" stroke-width="0.7"/><line x1="806.60" y1="360.8" x2="806.60" y2="363.2" stroke="#e8e8e8" stroke-width="0.7"/><line x1="812.78" y1="360.8" x2="812.78" y2="363.2" stroke="#e8e8e8" stroke-width="0.7"/><line x1="818.96" y1="360.8" x2="818.96" y2="363.2" stroke="#e8e8e8" stroke-width="0.7"/><line x1="825.14" y1="360.8" x2="825.14" y2="363.2" stroke="#e8e8e8" stroke-width="0.7"/><line x1="831.32" y1="360.8" x2="831.32" y2="363.2" stroke="#e8e8e8" stroke-width="0.7"/><line x1="837.50" y1="360.8" x2="837.50" y2="363.2" stroke="#e8e8e8" stroke-width="0.7"/><line x1="843.68" y1="360.8" x2="843.68" y2="363.2" stroke="#e8e8e8" stroke-width="0.7"/><line x1="849.86" y1="360.8" x2="849.86" y2="363.2" stroke="#e8e8e8" stroke-width="0.7"/><line x1="856.04" y1="360.8" x2="856.04" y2="363.2" stroke="#e8e8e8" stroke-width="0.7"/><line x1="862.22" y1="360.8" x2="862.22" y2="363.2" stroke="#e8e8e8" stroke-width="0.7"/><line x1="868.40" y1="360.8" x2="868.40" y2="363.2" stroke="#e8e8e8" stroke-width="0.7"/><line x1="874.58" y1="360.8" x2="874.58" y2="363.2" stroke="#e8e8e8" stroke-width="0.7"/><line x1="880.76" y1="360.8" x2="880.76" y2="363.2" stroke="#e8e8e8" stroke-width="0.7"/><line x1="886.94" y1="360.8" x2="886.94" y2="363.2" stroke="#e8e8e8" stroke-width="0.7"/><line x1="893.12" y1="360.8" x2="893.12" y2="363.2" stroke="#e8e8e8" stroke-width="0.7"/><line x1="899.30" y1="360.8" x2="899.30" y2="363.2" stroke="#e8e8e8" stroke-width="0.7"/><line x1="905.48" y1="360.8" x2="905.48" y2="363.2" stroke="#e8e8e8" stroke-width="0.7"/><line x1="911.66" y1="360.8" x2="911.66" y2="363.2" stroke="#e8e8e8" stroke-width="0.7"/><line x1="917.84" y1="360.8" x2="917.84" y2="363.2" stroke="#e8e8e8" stroke-width="0.7"/><line x1="924.02" y1="360.8" x2="924.02" y2="363.2" stroke="#e8e8e8" stroke-width="0.7"/><line x1="930.20" y1="360.8" x2="930.20" y2="363.2" stroke="#e8e8e8" stroke-width="0.7"/><line x1="936.38" y1="360.8" x2="936.38" y2="363.2" stroke="#e8e8e8" stroke-width="0.7"/><line x1="942.56" y1="360.8" x2="942.56" y2="363.2" stroke="#e8e8e8" stroke-width="0.7"/><line x1="948.74" y1="360.8" x2="948.74" y2="363.2" stroke="#e8e8e8" stroke-width="0.7"/><line x1="954.92" y1="360.8" x2="954.92" y2="363.2" stroke="#e8e8e8" stroke-width="0.7"/><line x1="961.10" y1="360.8" x2="961.10" y2="363.2" stroke="#e8e8e8" stroke-width="0.7"/><line x1="967.28" y1="360.8" x2="967.28" y2="363.2" stroke="#e8e8e8" stroke-width="0.7"/><line x1="973.46" y1="360.8" x2="973.46" y2="363.2" stroke="#e8e8e8" stroke-width="0.7"/><line x1="979.64" y1="360.8" x2="979.64" y2="363.2" stroke="#e8e8e8" stroke-width="0.7"/><line x1="985.82" y1="360.8" x2="985.82" y2="363.2" stroke="#e8e8e8" stroke-width="0.7"/><line x1="992.00" y1="360.8" x2="992.00" y2="363.2" stroke="#e8e8e8" stroke-width="0.7"/><line x1="836.30" y1="295.00" x2="838.70" y2="295.00" stroke="#d8d8d8" stroke-width="0.7"/><line x1="836.30" y1="299.47" x2="838.70" y2="299.47" stroke="#d8d8d8" stroke-width="0.7"/><line x1="836.30" y1="303.93" x2="838.70" y2="303.93" stroke="#d8d8d8" stroke-width="0.7"/><line x1="836.30" y1="308.40" x2="838.70" y2="308.40" stroke="#d8d8d8" stroke-width="0.7"/><line x1="836.30" y1="312.87" x2="838.70" y2="312.87" stroke="#d8d8d8" stroke-width="0.7"/><line x1="836.30" y1="317.33" x2="838.70" y2="317.33" stroke="#d8d8d8" stroke-width="0.7"/><line x1="836.30" y1="321.80" x2="838.70" y2="321.80" stroke="#d8d8d8" stroke-width="0.7"/><line x1="836.30" y1="326.27" x2="838.70" y2="326.27" stroke="#d8d8d8" stroke-width="0.7"/><line x1="836.30" y1="330.73" x2="838.70" y2="330.73" stroke="#d8d8d8" stroke-width="0.7"/><line x1="836.30" y1="335.20" x2="838.70" y2="335.20" stroke="#d8d8d8" stroke-width="0.7"/><line x1="836.30" y1="339.67" x2="838.70" y2="339.67" stroke="#d8d8d8" stroke-width="0.7"/><line x1="836.30" y1="344.13" x2="838.70" y2="344.13" stroke="#d8d8d8" stroke-width="0.7"/><line x1="836.30" y1="348.60" x2="838.70" y2="348.60" stroke="#d8d8d8" stroke-width="0.7"/><line x1="836.30" y1="353.07" x2="838.70" y2="353.07" stroke="#d8d8d8" stroke-width="0.7"/><line x1="836.30" y1="357.53" x2="838.70" y2="357.53" stroke="#d8d8d8" stroke-width="0.7"/><line x1="836.30" y1="362.00" x2="838.70" y2="362.00" stroke="#d8d8d8" stroke-width="0.7"/><line x1="836.30" y1="366.47" x2="838.70" y2="366.47" stroke="#d8d8d8" stroke-width="0.7"/><line x1="836.30" y1="370.93" x2="838.70" y2="370.93" stroke="#d8d8d8" stroke-width="0.7"/><line x1="836.30" y1="375.40" x2="838.70" y2="375.40" stroke="#d8d8d8" stroke-width="0.7"/><line x1="836.30" y1="379.87" x2="838.70" y2="379.87" stroke="#d8d8d8" stroke-width="0.7"/><line x1="836.30" y1="384.33" x2="838.70" y2="384.33" stroke="#d8d8d8" stroke-width="0.7"/><line x1="836.30" y1="388.80" x2="838.70" y2="388.80" stroke="#d8d8d8" stroke-width="0.7"/><line x1="836.30" y1="393.27" x2="838.70" y2="393.27" stroke="#d8d8d8" stroke-width="0.7"/><line x1="836.30" y1="397.73" x2="838.70" y2="397.73" stroke="#d8d8d8" stroke-width="0.7"/><line x1="836.30" y1="402.20" x2="838.70" y2="402.20" stroke="#d8d8d8" stroke-width="0.7"/><line x1="836.30" y1="406.67" x2="838.70" y2="406.67" stroke="#d8d8d8" stroke-width="0.7"/><line x1="836.30" y1="411.13" x2="838.70" y2="411.13" stroke="#d8d8d8" stroke-width="0.7"/><line x1="836.30" y1="415.60" x2="838.70" y2="415.60" stroke="#d8d8d8" stroke-width="0.7"/><line x1="836.30" y1="420.07" x2="838.70" y2="420.07" stroke="#d8d8d8" stroke-width="0.7"/><line x1="836.30" y1="424.53" x2="838.70" y2="424.53" stroke="#d8d8d8" stroke-width="0.7"/><line x1="836.30" y1="429.00" x2="838.70" y2="429.00" stroke="#d8d8d8" stroke-width="0.7"/><line x1="683.3" y1="295" x2="683.3" y2="429" stroke="#1f8a3a" stroke-width="1"/><polygon points="679,291 687,291 683,295.5" fill="#8a5ad0"/><polyline points="683.00,362.00 683.70,359.95 684.40,357.90 685.10,355.88 685.80,353.89 686.50,351.94 687.20,350.04 687.90,348.20 688.60,346.43 689.30,344.74 690.00,343.14 690.70,341.64 691.40,340.23 692.10,338.94 692.80,337.77 693.50,336.72 694.20,335.80 694.90,335.02 695.60,334.37 696.30,333.86 697.00,333.49 697.70,333.27 698.40,333.20 699.10,333.27 699.80,333.49 700.50,333.86 701.20,334.37 701.90,335.02 702.60,335.80 703.30,336.72 704.00,337.77 704.70,338.94 705.40,340.23 706.10,341.64 706.80,343.14 707.50,344.74 708.20,346.43 708.90,348.20 709.60,350.04 710.30,351.94 711.00,353.89 711.70,355.88 712.40,357.90 713.10,359.95 713.80,362.00 714.50,364.05 715.20,366.10 715.90,368.12 716.60,370.11 717.30,372.06 718.00,373.96 718.70,375.80 719.40,377.57 720.10,379.26 720.80,380.86 721.50,382.36 722.20,383.77 722.90,385.06 723.60,386.23 724.30,387.28 725.00,388.20 725.70,388.98 726.40,389.63 727.10,390.14 727.80,390.51 728.50,390.73 729.20,390.80 729.90,390.73 730.60,390.51 731.30,390.14 732.00,389.63 732.70,388.98 733.40,388.20 734.10,387.28 734.80,386.23 735.50,385.06 736.20,383.77 736.90,382.36 737.60,380.86 738.30,379.26 739.00,377.57 739.70,375.80 740.40,373.96 741.10,372.06 741.80,370.11 742.50,368.12 743.20,366.10 743.90,364.05 744.60,362.00 745.30,359.95 746.00,357.90 746.70,355.88 747.40,353.89 748.10,351.94 748.80,350.04 749.50,348.20 750.20,346.43 750.90,344.74 751.60,343.14 752.30,341.64 753.00,340.23 753.70,338.94 754.40,337.77 755.10,336.72 755.80,335.80 756.50,335.02 757.20,334.37 757.90,333.86 758.60,333.49 759.30,333.27 760.00,333.20 760.70,333.27 761.40,333.49 762.10,333.86 762.80,334.37 763.50,335.02 764.20,335.80 764.90,336.72 765.60,337.77 766.30,338.94 767.00,340.23 767.70,341.64 768.40,343.14 769.10,344.74 769.80,346.43 770.50,348.20 771.20,350.04 771.90,351.94 772.60,353.89 773.30,355.88 774.00,357.90 774.70,359.95 775.40,362.00 776.10,364.05 776.80,366.10 777.50,368.12 778.20,370.11 778.90,372.06 779.60,373.96 780.30,375.80 781.00,377.57 781.70,379.26 782.40,380.86 783.10,382.36 783.80,383.77 784.50,385.06 785.20,386.23 785.90,387.28 786.60,388.20 787.30,388.98 788.00,389.63 788.70,390.14 789.40,390.51 790.10,390.73 790.80,390.80 791.50,390.73 792.20,390.51 792.90,390.14 793.60,389.63 794.30,388.98 795.00,388.20 795.70,387.28 796.40,386.23 797.10,385.06 797.80,383.77 798.50,382.36 799.20,380.86 799.90,379.26 800.60,377.57 801.30,375.80 802.00,373.96 802.70,372.06 803.40,370.11 804.10,368.12 804.80,366.10 805.50,364.05 806.20,362.00 806.90,359.95 807.60,357.90 808.30,355.88 809.00,353.89 809.70,351.94 810.40,350.04 811.10,348.20 811.80,346.43 812.50,344.74 813.20,343.14 813.90,341.64 814.60,340.23 815.30,338.94 816.00,337.77 816.70,336.72 817.40,335.80 818.10,335.02 818.80,334.37 819.50,333.86 820.20,333.49 820.90,333.27 821.60,333.20 822.30,333.27 823.00,333.49 823.70,333.86 824.40,334.37 825.10,335.02 825.80,335.80 826.50,336.72 827.20,337.77 827.90,338.94 828.60,340.23 829.30,341.64 830.00,343.14 830.70,344.74 831.40,346.43 832.10,348.20 832.80,350.04 833.50,351.94 834.20,353.89 834.90,355.88 835.60,357.90 836.30,359.95 837.00,362.00 837.70,364.05 838.40,366.10 839.10,368.12 839.80,370.11 840.50,372.06 841.20,373.96 841.90,375.80 842.60,377.57 843.30,379.26 844.00,380.86 844.70,382.36 845.40,383.77 846.10,385.06 846.80,386.23 847.50,387.28 848.20,388.20 848.90,388.98 849.60,389.63 850.30,390.14 851.00,390.51 851.70,390.73 852.40,390.80 853.10,390.73 853.80,390.51 854.50,390.14 855.20,389.63 855.90,388.98 856.60,388.20 857.30,387.28 858.00,386.23 858.70,385.06 859.40,383.77 860.10,382.36 860.80,380.86 861.50,379.26 862.20,377.57 862.90,375.80 863.60,373.96 864.30,372.06 865.00,370.11 865.70,368.12 866.40,366.10 867.10,364.05 867.80,362.00 868.50,359.95 869.20,357.90 869.90,355.88 870.60,353.89 871.30,351.94 872.00,350.04 872.70,348.20 873.40,346.43 874.10,344.74 874.80,343.14 875.50,341.64 876.20,340.23 876.90,338.94 877.60,337.77 878.30,336.72 879.00,335.80 879.70,335.02 880.40,334.37 881.10,333.86 881.80,333.49 882.50,333.27 883.20,333.20 883.90,333.27 884.60,333.49 885.30,333.86 886.00,334.37 886.70,335.02 887.40,335.80 888.10,336.72 888.80,337.77 889.50,338.94 890.20,340.23 890.90,341.64 891.60,343.14 892.30,344.74 893.00,346.43 893.70,348.20 894.40,350.04 895.10,351.94 895.80,353.89 896.50,355.88 897.20,357.90 897.90,359.95 898.60,362.00 899.30,364.05 900.00,366.10 900.70,368.12 901.40,370.11 902.10,372.06 902.80,373.96 903.50,375.80 904.20,377.57 904.90,379.26 905.60,380.86 906.30,382.36 907.00,383.77 907.70,385.06 908.40,386.23 909.10,387.28 909.80,388.20 910.50,388.98 911.20,389.63 911.90,390.14 912.60,390.51 913.30,390.73 914.00,390.80 914.70,390.73 915.40,390.51 916.10,390.14 916.80,389.63 917.50,388.98 918.20,388.20 918.90,387.28 919.60,386.23 920.30,385.06 921.00,383.77 921.70,382.36 922.40,380.86 923.10,379.26 923.80,377.57 924.50,375.80 925.20,373.96 925.90,372.06 926.60,370.11 927.30,368.12 928.00,366.10 928.70,364.05 929.40,362.00 930.10,359.95 930.80,357.90 931.50,355.88 932.20,353.89 932.90,351.94 933.60,350.04 934.30,348.20 935.00,346.43 935.70,344.74 936.40,343.14 937.10,341.64 937.80,340.23 938.50,338.94 939.20,337.77 939.90,336.72 940.60,335.80 941.30,335.02 942.00,334.37 942.70,333.86 943.40,333.49 944.10,333.27 944.80,333.20 945.50,333.27 946.20,333.49 946.90,333.86 947.60,334.37 948.30,335.02 949.00,335.80 949.70,336.72 950.40,337.77 951.10,338.94 951.80,340.23 952.50,341.64 953.20,343.14 953.90,344.74 954.60,346.43 955.30,348.20 956.00,350.04 956.70,351.94 957.40,353.89 958.10,355.88 958.80,357.90 959.50,359.95 960.20,362.00 960.90,364.05 961.60,366.10 962.30,368.12 963.00,370.11 963.70,372.06 964.40,373.96 965.10,375.80 965.80,377.57 966.50,379.26 967.20,380.86 967.90,382.36 968.60,383.77 969.30,385.06 970.00,386.23 970.70,387.28 971.40,388.20 972.10,388.98 972.80,389.63 973.50,390.14 974.20,390.51 974.90,390.73 975.60,390.80 976.30,390.73 977.00,390.51 977.70,390.14 978.40,389.63 979.10,388.98 979.80,388.20 980.50,387.28 981.20,386.23 981.90,385.06 982.60,383.77 983.30,382.36 984.00,380.86 984.70,379.26 985.40,377.57 986.10,375.80 986.80,373.96 987.50,372.06 988.20,370.11 988.90,368.12 989.60,366.10 990.30,364.05 991.00,362.00 991.70,359.95" fill="none" stroke="#a03838" stroke-width="1.1"/><rect x="677" y="434" width="320" height="12" fill="#f0f0f0" /><text transform="translate(681,443) scale(0.9,1)" font-family="Liberation Sans" font-size="7" fill="#555" text-anchor="start">&lt;</text><rect x="686" y="436" width="10" height="8" fill="#dadada" /><text transform="translate(993,443) scale(0.9,1)" font-family="Liberation Sans" font-size="7" fill="#555" text-anchor="start">></text><rect x="677" y="446.5" width="35" height="33" fill="#f0f0f0" stroke="#dadada" stroke-width="0.8" /><rect x="712" y="446.5" width="188" height="33" fill="#fff" stroke="#8a8a8a" stroke-width="0.8" /><text transform="translate(680,456.8) scale(0.9,1)" font-family="Liberation Sans" font-size="7" fill="#000" text-anchor="start">T1</text><text transform="translate(680,464.8) scale(0.9,1)" font-family="Liberation Sans" font-size="7" fill="#000" text-anchor="start">T2</text><text transform="translate(679.5,476.3) scale(0.9,1)" font-family="Liberation Sans" font-size="6.6" fill="#000" text-anchor="start">T2-T1</text><rect x="692" y="449.5" width="8.2" height="8.6" fill="#e4e4e4" /><rect x="700.8" y="449.5" width="8.2" height="8.6" fill="#e4e4e4" /><path d="M694,453.8 h4.5 M694,453.8 l2,-2 M694,453.8 l2,2" stroke="#000" stroke-width="1.1" fill="none"/><path d="M707,453.8 h-4.5 M707,453.8 l-2,-2 M707,453.8 l-2,2" stroke="#000" stroke-width="1.1" fill="none"/><rect x="692" y="459" width="8.2" height="8.6" fill="#e4e4e4" /><rect x="700.8" y="459" width="8.2" height="8.6" fill="#e4e4e4" /><path d="M694,463.3 h4.5 M694,463.3 l2,-2 M694,463.3 l2,2" stroke="#000" stroke-width="1.1" fill="none"/><path d="M707,463.3 h-4.5 M707,463.3 l-2,-2 M707,463.3 l-2,2" stroke="#000" stroke-width="1.1" fill="none"/><text transform="translate(733,453) scale(0.9,1)" font-family="Liberation Sans" font-size="6.6" fill="#000" text-anchor="middle">Time</text><text transform="translate(780,453) scale(0.9,1)" font-family="Liberation Sans" font-size="6.6" fill="#000" text-anchor="middle">Channel_A</text><text transform="translate(826,453) scale(0.9,1)" font-family="Liberation Sans" font-size="6.6" fill="#000" text-anchor="middle">Channel_B</text><text transform="translate(733,460.8) scale(0.9,1)" font-family="Liberation Sans" font-size="6.6" fill="#000" text-anchor="middle">0.000 s</text><text transform="translate(780,460.8) scale(0.9,1)" font-family="Liberation Sans" font-size="6.6" fill="#000" text-anchor="middle">0.000 V</text><text transform="translate(733,468.3) scale(0.9,1)" font-family="Liberation Sans" font-size="6.6" fill="#000" text-anchor="middle">0.000 s</text><text transform="translate(780,468.3) scale(0.9,1)" font-family="Liberation Sans" font-size="6.6" fill="#000" text-anchor="middle">0.000 V</text><text transform="translate(733,475.7) scale(0.9,1)" font-family="Liberation Sans" font-size="6.6" fill="#000" text-anchor="middle">0.000 s</text><text transform="translate(780,475.7) scale(0.9,1)" font-family="Liberation Sans" font-size="6.6" fill="#000" text-anchor="middle">0.000 V</text><rect x="905.7" y="450.8" width="34.3" height="10.3" fill="#e1e1e1" stroke="#c4c4c4" stroke-width="0.8" /><text transform="translate(922.85,458.39799999999997) scale(0.9,1)" font-family="Liberation Sans" font-size="6.8" fill="#000" text-anchor="middle">Reverse</text><rect x="905.7" y="467.1" width="34.3" height="10.4" fill="#e1e1e1" stroke="#c4c4c4" stroke-width="0.8" /><text transform="translate(922.85,474.748) scale(0.9,1)" font-family="Liberation Sans" font-size="6.8" fill="#000" text-anchor="middle">Save</text><text transform="translate(945.8,479.5) scale(0.9,1)" font-family="Liberation Sans" font-size="6.8" fill="#000" text-anchor="start">Ext. trigger</text><circle cx="984.5" cy="478.3" r="3.3" fill="#fff" stroke="#c8c8c8" stroke-width="0.8"/><rect x="678.5" y="487.5" width="75" height="44" fill="none" stroke="#dcdcdc" stroke-width="0.8" /><rect x="681" y="484" width="32.8" height="6" fill="#f0f0f0" /><rect x="754.5" y="487.5" width="75" height="44" fill="none" stroke="#dcdcdc" stroke-width="0.8" /><rect x="757" y="484" width="36.4" height="6" fill="#f0f0f0" /><rect x="830.5" y="487.5" width="75" height="44" fill="none" stroke="#dcdcdc" stroke-width="0.8" /><rect x="833" y="484" width="36.4" height="6" fill="#f0f0f0" /><rect x="906.5" y="487.5" width="88" height="44" fill="none" stroke="#dcdcdc" stroke-width="0.8" /><rect x="909" y="484" width="29.2" height="6" fill="#f0f0f0" /><text transform="translate(681.9,490.3) scale(0.9,1)" font-family="Liberation Sans" font-size="6.9" fill="#000" text-anchor="start">Timebase</text><text transform="translate(758.5,490.3) scale(0.9,1)" font-family="Liberation Sans" font-size="6.9" fill="#000" text-anchor="start">Channel A</text><text transform="translate(834.4,490.3) scale(0.9,1)" font-family="Liberation Sans" font-size="6.9" fill="#000" text-anchor="start">Channel B</text><text transform="translate(910.2,490.3) scale(0.9,1)" font-family="Liberation Sans" font-size="6.9" fill="#000" text-anchor="start">Trigger</text><text transform="translate(678,500.6) scale(0.9,1)" font-family="Liberation Sans" font-size="6.8" fill="#000" text-anchor="start">Scale:</text><rect x="699.8" y="492.8" width="50" height="10" fill="#fff" stroke="#7a7a7a" stroke-width="1" /><text transform="translate(702.3,500.248) scale(0.9,1)" font-family="Liberation Sans" font-size="6.8" fill="#000" text-anchor="start">500 us/Div</text><text transform="translate(678,512.1) scale(0.9,1)" font-family="Liberation Sans" font-size="6.8" fill="#000" text-anchor="start">X pos.(Div):</text><rect x="715.1" y="505.3" width="34.6" height="9.6" fill="#fff" stroke="#7a7a7a" stroke-width="1" /><text transform="translate(717.6,512.548) scale(0.9,1)" font-family="Liberation Sans" font-size="6.8" fill="#000" text-anchor="start">0</text><rect x="681.8" y="519.2" width="12.8" height="10.5" fill="#cce4f7" stroke="#3d8ad6" stroke-width="0.8" /><text transform="translate(688.1999999999999,526.826) scale(0.9,1)" font-family="Liberation Sans" font-size="6.6" fill="#000" text-anchor="middle">Y/T</text><rect x="695.6" y="519.2" width="15.5" height="10.5" fill="#e1e1e1" stroke="#c4c4c4" stroke-width="0.8" /><text transform="translate(703.35,526.826) scale(0.9,1)" font-family="Liberation Sans" font-size="6.6" fill="#000" text-anchor="middle">Add</text><rect x="714.5" y="519.2" width="14.4" height="10.5" fill="#e1e1e1" stroke="#c4c4c4" stroke-width="0.8" /><text transform="translate(721.7,526.826) scale(0.9,1)" font-family="Liberation Sans" font-size="6.6" fill="#000" text-anchor="middle">B/A</text><rect x="730.0" y="519.2" width="15.7" height="10.5" fill="#e1e1e1" stroke="#c4c4c4" stroke-width="0.8" /><text transform="translate(737.85,526.826) scale(0.9,1)" font-family="Liberation Sans" font-size="6.6" fill="#000" text-anchor="middle">A/B</text><text transform="translate(755,500.6) scale(0.9,1)" font-family="Liberation Sans" font-size="6.8" fill="#000" text-anchor="start">Scale:</text><rect x="776.8" y="492.8" width="49.7" height="10" fill="#fff" stroke="#7a7a7a" stroke-width="1" /><text transform="translate(779.3,500.248) scale(0.9,1)" font-family="Liberation Sans" font-size="6.8" fill="#000" text-anchor="start">10&#160; V/Div</text><text transform="translate(755,512.1) scale(0.9,1)" font-family="Liberation Sans" font-size="6.8" fill="#000" text-anchor="start">Y pos.(Div):</text><rect x="791.7" y="505.3" width="34.8" height="9.6" fill="#fff" stroke="#7a7a7a" stroke-width="1" /><text transform="translate(794.2,512.548) scale(0.9,1)" font-family="Liberation Sans" font-size="6.8" fill="#000" text-anchor="start">0</text><rect x="756.5" y="519.2" width="12" height="10.5" fill="#e1e1e1" stroke="#c4c4c4" stroke-width="0.8" /><text transform="translate(762.5,526.826) scale(0.9,1)" font-family="Liberation Sans" font-size="6.6" fill="#000" text-anchor="middle">AC</text><rect x="770.0" y="519.2" width="13.5" height="10.5" fill="#e1e1e1" stroke="#c4c4c4" stroke-width="0.8" /><text transform="translate(776.75,526.826) scale(0.9,1)" font-family="Liberation Sans" font-size="6.6" fill="#000" text-anchor="middle">0</text><rect x="787.3" y="519.2" width="12.9" height="10.5" fill="#cce4f7" stroke="#3d8ad6" stroke-width="0.8" /><text transform="translate(793.75,526.826) scale(0.9,1)" font-family="Liberation Sans" font-size="6.6" fill="#000" text-anchor="middle">DC</text><circle cx="820.5" cy="523" r="2.4" fill="#e8e8e8" stroke="#c8c8c8" stroke-width="0.7"/><text transform="translate(831,500.6) scale(0.9,1)" font-family="Liberation Sans" font-size="6.8" fill="#000" text-anchor="start">Scale:</text><rect x="853.3" y="492.8" width="49.5" height="10" fill="#fff" stroke="#7a7a7a" stroke-width="1" /><text transform="translate(855.8,500.248) scale(0.9,1)" font-family="Liberation Sans" font-size="6.8" fill="#000" text-anchor="start">5&#160; V/Div</text><text transform="translate(831,512.1) scale(0.9,1)" font-family="Liberation Sans" font-size="6.8" fill="#000" text-anchor="start">Y pos.(Div):</text><rect x="869.1" y="505.3" width="33.7" height="9.6" fill="#fff" stroke="#7a7a7a" stroke-width="1" /><text transform="translate(871.6,512.548) scale(0.9,1)" font-family="Liberation Sans" font-size="6.8" fill="#000" text-anchor="start">0</text><rect x="832.5" y="519.2" width="12" height="10.5" fill="#e1e1e1" stroke="#c4c4c4" stroke-width="0.8" /><text transform="translate(838.5,526.826) scale(0.9,1)" font-family="Liberation Sans" font-size="6.6" fill="#000" text-anchor="middle">AC</text><rect x="848.0" y="519.2" width="11" height="10.5" fill="#e1e1e1" stroke="#c4c4c4" stroke-width="0.8" /><text transform="translate(853.5,526.826) scale(0.9,1)" font-family="Liberation Sans" font-size="6.6" fill="#000" text-anchor="middle">0</text><rect x="861.5" y="519.2" width="14" height="10.5" fill="#cce4f7" stroke="#3d8ad6" stroke-width="0.8" /><text transform="translate(868.5,526.826) scale(0.9,1)" font-family="Liberation Sans" font-size="6.6" fill="#000" text-anchor="middle">DC</text><rect x="878.5" y="519.2" width="9" height="10.5" fill="#e1e1e1" stroke="#c4c4c4" stroke-width="0.8" /><text transform="translate(883.0,526.826) scale(0.9,1)" font-family="Liberation Sans" font-size="6.6" fill="#000" text-anchor="middle">-</text><circle cx="899" cy="523" r="3.3" fill="#fff" stroke="#c8c8c8" stroke-width="0.8"/><text transform="translate(908,501) scale(0.9,1)" font-family="Liberation Sans" font-size="6.8" fill="#000" text-anchor="start">Edge:</text><rect x="934.5" y="495.2" width="8" height="8.5" fill="#cce4f7" stroke="#3d8ad6" stroke-width="0.8" /><text transform="translate(938.5,501.82599999999996) scale(0.9,1)" font-family="Liberation Sans" font-size="6.6" fill="#000" text-anchor="middle"></text><rect x="943.5" y="495.2" width="9.8" height="8.5" fill="#e1e1e1" stroke="#c4c4c4" stroke-width="0.8" /><text transform="translate(948.4,501.82599999999996) scale(0.9,1)" font-family="Liberation Sans" font-size="6.6" fill="#000" text-anchor="middle"></text><path d="M936.5,502 h2 v-5 h2" fill="none" stroke="#000" stroke-width="0.9"/><path d="M945.5,497 h2 v5 h2" fill="none" stroke="#555" stroke-width="0.9"/><rect x="956.8" y="495.2" width="9.3" height="8.5" fill="#cce4f7" stroke="#3d8ad6" stroke-width="0.8" /><text transform="translate(961.4499999999999,501.82599999999996) scale(0.9,1)" font-family="Liberation Sans" font-size="6.6" fill="#000" text-anchor="middle">A</text><rect x="967.3" y="495.2" width="11" height="8.5" fill="#e1e1e1" stroke="#c4c4c4" stroke-width="0.8" /><text transform="translate(972.8,501.82599999999996) scale(0.9,1)" font-family="Liberation Sans" font-size="6.6" fill="#000" text-anchor="middle">B</text><rect x="979.5" y="495.2" width="12.5" height="8.5" fill="#e1e1e1" stroke="#c4c4c4" stroke-width="0.8" /><text transform="translate(985.75,501.82599999999996) scale(0.9,1)" font-family="Liberation Sans" font-size="6.6" fill="#000" text-anchor="middle">Ext</text><text transform="translate(908,512.2) scale(0.9,1)" font-family="Liberation Sans" font-size="6.8" fill="#000" text-anchor="start">Level:</text><rect x="933.9" y="507.1" width="42.1" height="9.4" fill="#fff" stroke="#7a7a7a" stroke-width="1" /><text transform="translate(936.4,514.248) scale(0.9,1)" font-family="Liberation Sans" font-size="6.8" fill="#000" text-anchor="start">0</text><rect x="977.0" y="507.1" width="14.5" height="9.4" fill="#fff" stroke="#7a7a7a" stroke-width="1" /><text transform="translate(979.5,514.248) scale(0.9,1)" font-family="Liberation Sans" font-size="6.8" fill="#000" text-anchor="start">V</text><rect x="909.3" y="518.5" width="20.8" height="11" fill="#cce4f7" stroke="#3d8ad6" stroke-width="0.8" /><text transform="translate(919.6999999999999,526.376) scale(0.9,1)" font-family="Liberation Sans" font-size="6.6" fill="#000" text-anchor="middle">Single</text><rect x="931.5" y="518.5" width="23.5" height="11" fill="#e1e1e1" stroke="#c4c4c4" stroke-width="0.8" /><text transform="translate(943.25,526.376) scale(0.9,1)" font-family="Liberation Sans" font-size="6.6" fill="#000" text-anchor="middle">Normal</text><rect x="956.3" y="518.5" width="16.5" height="11" fill="#e1e1e1" stroke="#c4c4c4" stroke-width="0.8" /><text transform="translate(964.55,526.376) scale(0.9,1)" font-family="Liberation Sans" font-size="6.6" fill="#000" text-anchor="middle">Auto</text><rect x="974.0" y="518.5" width="18" height="11" fill="#e1e1e1" stroke="#c4c4c4" stroke-width="0.8" /><text transform="translate(983.0,526.376) scale(0.9,1)" font-family="Liberation Sans" font-size="6.6" fill="#000" text-anchor="middle">None</text></svg></div></body></html>
